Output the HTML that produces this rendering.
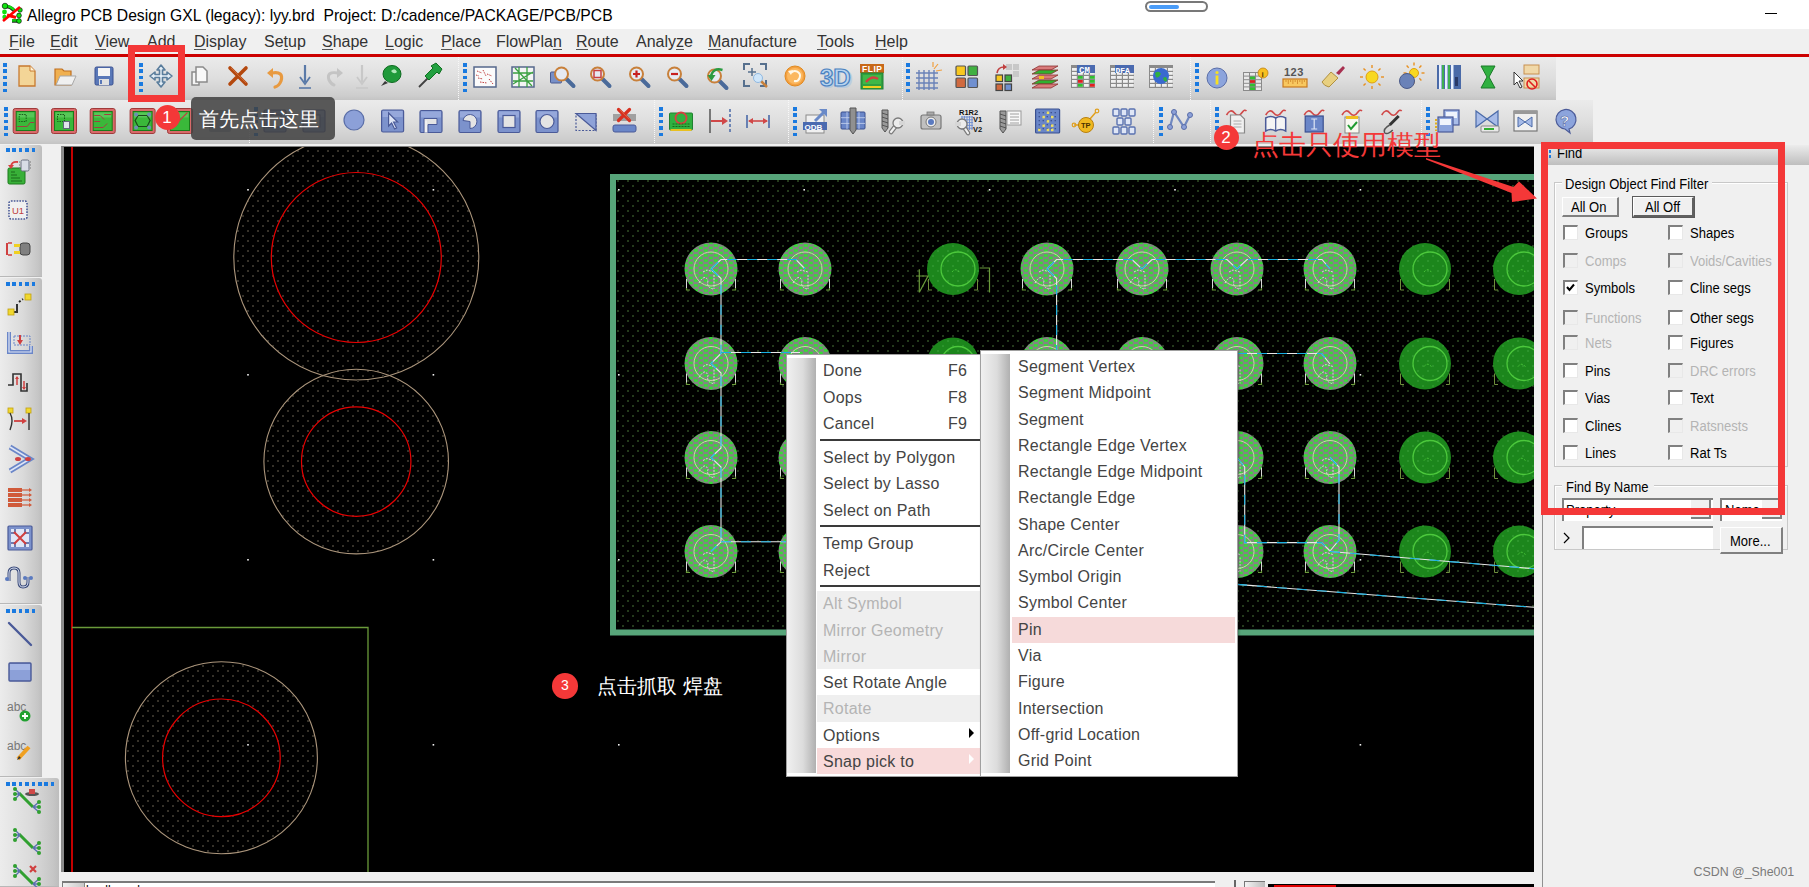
<!DOCTYPE html><html><head><meta charset="utf-8"><style>
*{margin:0;padding:0;box-sizing:border-box}
html,body{width:1809px;height:887px;overflow:hidden;background:#f0f0f0;font-family:"Liberation Sans",sans-serif;color:#000}
.ab{position:absolute}
.t{position:absolute;white-space:nowrap;line-height:1}
.mi{position:absolute;white-space:nowrap;line-height:1;font-size:16px;color:#444;letter-spacing:.25px}
.fp{position:absolute;white-space:nowrap;line-height:1;font-size:14px;color:#000;transform:scaleX(.93);transform-origin:0 0}
.dis{color:#b4b4b4 !important}
.cb{position:absolute;width:15px;height:15px;background:#fff;border-top:2px solid #808080;border-left:2px solid #808080;border-bottom:1px solid #e8e8e8;border-right:1px solid #e8e8e8}
.cbd{background:#f0f0f0}
</style></head><body>

<div class="ab" style="left:0;top:0;width:1809px;height:29px;background:#fff"></div>
<div class="t" style="left:27px;top:7.5px;font-size:15.7px;color:#000">Allegro PCB Design GXL (legacy): lyy.brd&nbsp; Project: D:/cadence/PACKAGE/PCB/PCB</div>
<svg class="ab" style="left:0;top:0" width="26" height="28" viewBox="0 0 26 28">
<g stroke="#000" stroke-width="1" opacity=".9">
<path d="M5 6.5 Q10 6 14 10.5" stroke="#000" stroke-width="3.4" fill="none"/>
<path d="M12 21 H19" stroke="#000" stroke-width="3.4"/>
</g>
<path d="M5 6 Q10 5.5 14 10" stroke="#10e010" stroke-width="2.4" fill="none"/>
<path d="M12 20.5 H19" stroke="#10c010" stroke-width="2.6"/>
<circle cx="5" cy="6" r="2.8" fill="#10e010" stroke="#000" stroke-width=".6"/><circle cx="4.5" cy="12" r="2.4" fill="#10e010"/><circle cx="4.5" cy="17" r="2.2" fill="#10e010"/>
<circle cx="20" cy="10" r="2.3" fill="#10e010" stroke="#000" stroke-width=".6"/><circle cx="19" cy="15.5" r="2.4" fill="#10e010" stroke="#000" stroke-width=".6"/><circle cx="19" cy="21" r="2.4" fill="#10e010" stroke="#000" stroke-width=".6"/>
<path d="M3 21 L20 7" stroke="#ff0000" stroke-width="2.6"/>
<path d="M7 15 L16 17.5" stroke="#ff0000" stroke-width="3.2"/>
</svg>
<div class="ab" style="left:1145px;top:1px;width:63px;height:11px;border:2.5px solid #787878;border-radius:6px;background:#fff"></div>
<div class="ab" style="left:1149px;top:5px;width:30px;height:4px;background:#4a9cf8;border-radius:2px"></div>
<div class="ab" style="left:1765px;top:13px;width:12px;height:1.2px;background:#000"></div>
<div class="ab" style="left:0;top:29px;width:1809px;height:25px;background:#f0f0f0"></div>
<div class="t" style="left:9px;top:34px;font-size:16px;color:#333">File</div>
<div class="ab" style="left:9.0px;top:48.5px;width:9.8px;height:1px;background:#555"></div>
<div class="t" style="left:50px;top:34px;font-size:16px;color:#333">Edit</div>
<div class="ab" style="left:50.0px;top:48.5px;width:10.7px;height:1px;background:#555"></div>
<div class="t" style="left:95px;top:34px;font-size:16px;color:#333">View</div>
<div class="ab" style="left:95.0px;top:48.5px;width:10.7px;height:1px;background:#555"></div>
<div class="t" style="left:147px;top:34px;font-size:16px;color:#333">Add</div>
<div class="ab" style="left:147.0px;top:48.5px;width:10.7px;height:1px;background:#555"></div>
<div class="t" style="left:194px;top:34px;font-size:16px;color:#333">Display</div>
<div class="ab" style="left:194.0px;top:48.5px;width:11.6px;height:1px;background:#555"></div>
<div class="t" style="left:264px;top:34px;font-size:16px;color:#333">Setup</div>
<div class="ab" style="left:283.6px;top:48.5px;width:4.5px;height:1px;background:#555"></div>
<div class="t" style="left:322px;top:34px;font-size:16px;color:#333">Shape</div>
<div class="ab" style="left:322.0px;top:48.5px;width:10.7px;height:1px;background:#555"></div>
<div class="t" style="left:385px;top:34px;font-size:16px;color:#333">Logic</div>
<div class="ab" style="left:385.0px;top:48.5px;width:8.9px;height:1px;background:#555"></div>
<div class="t" style="left:441px;top:34px;font-size:16px;color:#333">Place</div>
<div class="ab" style="left:441.0px;top:48.5px;width:10.7px;height:1px;background:#555"></div>
<div class="t" style="left:496px;top:34px;font-size:16px;color:#333">FlowPlan</div>
<div class="ab" style="left:553.0px;top:48.5px;width:8.9px;height:1px;background:#555"></div>
<div class="t" style="left:576px;top:34px;font-size:16px;color:#333">Route</div>
<div class="ab" style="left:576.0px;top:48.5px;width:11.6px;height:1px;background:#555"></div>
<div class="t" style="left:636px;top:34px;font-size:16px;color:#333">Analyze</div>
<div class="ab" style="left:676.0px;top:48.5px;width:8.0px;height:1px;background:#555"></div>
<div class="t" style="left:708px;top:34px;font-size:16px;color:#333">Manufacture</div>
<div class="ab" style="left:708.0px;top:48.5px;width:13.3px;height:1px;background:#555"></div>
<div class="t" style="left:817px;top:34px;font-size:16px;color:#333">Tools</div>
<div class="ab" style="left:817.0px;top:48.5px;width:9.8px;height:1px;background:#555"></div>
<div class="t" style="left:875px;top:34px;font-size:16px;color:#333">Help</div>
<div class="ab" style="left:875.0px;top:48.5px;width:11.6px;height:1px;background:#555"></div>
<div class="ab" style="left:0;top:54px;width:1809px;height:3px;background:#cc0000"></div>
<div class="ab" style="left:0;top:57px;width:1809px;height:88px;background:#f0f0f0"></div>
<div class="ab" style="left:0px;top:57px;width:1556px;height:43px;background:linear-gradient(#ebebeb,#dedede 50%,#cdcdcd 90%,#c4c4c4)"></div>
<div class="ab" style="left:0px;top:100px;width:1593px;height:43.5px;background:linear-gradient(#ebebeb,#dedede 50%,#cdcdcd 90%,#c4c4c4)"></div>
<div class="ab" style="left:458px;top:57px;width:1px;height:43px;border-left:1px dotted #f8f8f8"></div>
<div class="ab" style="left:902px;top:57px;width:1px;height:43px;border-left:1px dotted #f8f8f8"></div>
<div class="ab" style="left:1190px;top:57px;width:1px;height:43px;border-left:1px dotted #f8f8f8"></div>
<div class="ab" style="left:249px;top:100px;width:1px;height:43px;border-left:1px dotted #f8f8f8"></div>
<div class="ab" style="left:654px;top:100px;width:1px;height:43px;border-left:1px dotted #f8f8f8"></div>
<div class="ab" style="left:788px;top:100px;width:1px;height:43px;border-left:1px dotted #f8f8f8"></div>
<div class="ab" style="left:1153px;top:100px;width:1px;height:43px;border-left:1px dotted #f8f8f8"></div>
<div class="ab" style="left:1210px;top:100px;width:1px;height:43px;border-left:1px dotted #f8f8f8"></div>
<div class="ab" style="left:1421px;top:100px;width:1px;height:43px;border-left:1px dotted #f8f8f8"></div>
<div class="ab" style="left:3px;top:63.0px;width:3.5px;height:3.5px;background:#1a7ae0"></div>
<div class="ab" style="left:3px;top:69.4px;width:3.5px;height:3.5px;background:#1a7ae0"></div>
<div class="ab" style="left:3px;top:75.8px;width:3.5px;height:3.5px;background:#1a7ae0"></div>
<div class="ab" style="left:3px;top:82.2px;width:3.5px;height:3.5px;background:#1a7ae0"></div>
<div class="ab" style="left:3px;top:88.6px;width:3.5px;height:3.5px;background:#1a7ae0"></div>
<div class="ab" style="left:139px;top:63.0px;width:3.5px;height:3.5px;background:#1a7ae0"></div>
<div class="ab" style="left:139px;top:69.4px;width:3.5px;height:3.5px;background:#1a7ae0"></div>
<div class="ab" style="left:139px;top:75.8px;width:3.5px;height:3.5px;background:#1a7ae0"></div>
<div class="ab" style="left:139px;top:82.2px;width:3.5px;height:3.5px;background:#1a7ae0"></div>
<div class="ab" style="left:139px;top:88.6px;width:3.5px;height:3.5px;background:#1a7ae0"></div>
<div class="ab" style="left:463px;top:63.0px;width:3.5px;height:3.5px;background:#1a7ae0"></div>
<div class="ab" style="left:463px;top:69.4px;width:3.5px;height:3.5px;background:#1a7ae0"></div>
<div class="ab" style="left:463px;top:75.8px;width:3.5px;height:3.5px;background:#1a7ae0"></div>
<div class="ab" style="left:463px;top:82.2px;width:3.5px;height:3.5px;background:#1a7ae0"></div>
<div class="ab" style="left:463px;top:88.6px;width:3.5px;height:3.5px;background:#1a7ae0"></div>
<div class="ab" style="left:906px;top:63.0px;width:3.5px;height:3.5px;background:#1a7ae0"></div>
<div class="ab" style="left:906px;top:69.4px;width:3.5px;height:3.5px;background:#1a7ae0"></div>
<div class="ab" style="left:906px;top:75.8px;width:3.5px;height:3.5px;background:#1a7ae0"></div>
<div class="ab" style="left:906px;top:82.2px;width:3.5px;height:3.5px;background:#1a7ae0"></div>
<div class="ab" style="left:906px;top:88.6px;width:3.5px;height:3.5px;background:#1a7ae0"></div>
<div class="ab" style="left:1195px;top:63.0px;width:3.5px;height:3.5px;background:#1a7ae0"></div>
<div class="ab" style="left:1195px;top:69.4px;width:3.5px;height:3.5px;background:#1a7ae0"></div>
<div class="ab" style="left:1195px;top:75.8px;width:3.5px;height:3.5px;background:#1a7ae0"></div>
<div class="ab" style="left:1195px;top:82.2px;width:3.5px;height:3.5px;background:#1a7ae0"></div>
<div class="ab" style="left:1195px;top:88.6px;width:3.5px;height:3.5px;background:#1a7ae0"></div>
<div class="ab" style="left:4px;top:107.0px;width:3.5px;height:3.5px;background:#1a7ae0"></div>
<div class="ab" style="left:4px;top:113.4px;width:3.5px;height:3.5px;background:#1a7ae0"></div>
<div class="ab" style="left:4px;top:119.8px;width:3.5px;height:3.5px;background:#1a7ae0"></div>
<div class="ab" style="left:4px;top:126.2px;width:3.5px;height:3.5px;background:#1a7ae0"></div>
<div class="ab" style="left:4px;top:132.6px;width:3.5px;height:3.5px;background:#1a7ae0"></div>
<div class="ab" style="left:254px;top:107.0px;width:3.5px;height:3.5px;background:#1a7ae0"></div>
<div class="ab" style="left:254px;top:113.4px;width:3.5px;height:3.5px;background:#1a7ae0"></div>
<div class="ab" style="left:254px;top:119.8px;width:3.5px;height:3.5px;background:#1a7ae0"></div>
<div class="ab" style="left:254px;top:126.2px;width:3.5px;height:3.5px;background:#1a7ae0"></div>
<div class="ab" style="left:254px;top:132.6px;width:3.5px;height:3.5px;background:#1a7ae0"></div>
<div class="ab" style="left:659px;top:107.0px;width:3.5px;height:3.5px;background:#1a7ae0"></div>
<div class="ab" style="left:659px;top:113.4px;width:3.5px;height:3.5px;background:#1a7ae0"></div>
<div class="ab" style="left:659px;top:119.8px;width:3.5px;height:3.5px;background:#1a7ae0"></div>
<div class="ab" style="left:659px;top:126.2px;width:3.5px;height:3.5px;background:#1a7ae0"></div>
<div class="ab" style="left:659px;top:132.6px;width:3.5px;height:3.5px;background:#1a7ae0"></div>
<div class="ab" style="left:793px;top:107.0px;width:3.5px;height:3.5px;background:#1a7ae0"></div>
<div class="ab" style="left:793px;top:113.4px;width:3.5px;height:3.5px;background:#1a7ae0"></div>
<div class="ab" style="left:793px;top:119.8px;width:3.5px;height:3.5px;background:#1a7ae0"></div>
<div class="ab" style="left:793px;top:126.2px;width:3.5px;height:3.5px;background:#1a7ae0"></div>
<div class="ab" style="left:793px;top:132.6px;width:3.5px;height:3.5px;background:#1a7ae0"></div>
<div class="ab" style="left:1159px;top:107.0px;width:3.5px;height:3.5px;background:#1a7ae0"></div>
<div class="ab" style="left:1159px;top:113.4px;width:3.5px;height:3.5px;background:#1a7ae0"></div>
<div class="ab" style="left:1159px;top:119.8px;width:3.5px;height:3.5px;background:#1a7ae0"></div>
<div class="ab" style="left:1159px;top:126.2px;width:3.5px;height:3.5px;background:#1a7ae0"></div>
<div class="ab" style="left:1159px;top:132.6px;width:3.5px;height:3.5px;background:#1a7ae0"></div>
<div class="ab" style="left:1215px;top:107.0px;width:3.5px;height:3.5px;background:#1a7ae0"></div>
<div class="ab" style="left:1215px;top:113.4px;width:3.5px;height:3.5px;background:#1a7ae0"></div>
<div class="ab" style="left:1215px;top:119.8px;width:3.5px;height:3.5px;background:#1a7ae0"></div>
<div class="ab" style="left:1215px;top:126.2px;width:3.5px;height:3.5px;background:#1a7ae0"></div>
<div class="ab" style="left:1215px;top:132.6px;width:3.5px;height:3.5px;background:#1a7ae0"></div>
<div class="ab" style="left:1426px;top:107.0px;width:3.5px;height:3.5px;background:#1a7ae0"></div>
<div class="ab" style="left:1426px;top:113.4px;width:3.5px;height:3.5px;background:#1a7ae0"></div>
<div class="ab" style="left:1426px;top:119.8px;width:3.5px;height:3.5px;background:#1a7ae0"></div>
<div class="ab" style="left:1426px;top:126.2px;width:3.5px;height:3.5px;background:#1a7ae0"></div>
<div class="ab" style="left:1426px;top:132.6px;width:3.5px;height:3.5px;background:#1a7ae0"></div>
<svg class="ab" style="left:0;top:57px" width="1809" height="88" viewBox="0 57 1809 88">
<path d="M19 66 H30 L35 71 V86 H19 Z" fill="#f3d597" stroke="#c87a30" stroke-width="1.3"/><path d="M30 66 V71 H35" fill="#fff4d8" stroke="#c87a30" stroke-width="1"/>
<path d="M55 69 H62 L64 71 H71 V85 H55 Z" fill="#f0b050" stroke="#c07020" stroke-width="1.2"/><path d="M56 85 L60 76 H76 L72 85 Z" fill="#f0f0f0" stroke="#a8a8a8" stroke-width="1"/>
<rect x="95" y="67" width="18" height="18" rx="1.5" fill="#5a78b8" stroke="#3a5090" stroke-width="1"/><rect x="98" y="68" width="12" height="8" fill="#f4f4f4"/><rect x="99" y="79" width="10" height="6" fill="#e0e0e0"/><rect x="100" y="80" width="2" height="4" fill="#5a78b8"/>
<path d="M161 65 L165 70 H162.5 V74.5 H167 V72 L172 76 L167 80 V77.5 H162.5 V82 H165 L161 87 L157 82 H159.5 V77.5 H155 V80 L150 76 L155 72 V74.5 H159.5 V70 H157 Z" fill="#e4eef6" stroke="#5a7d9c" stroke-width="1.6" stroke-linejoin="round"/>
<path d="M192 72 H199 V85 H192 Z" fill="#f4f4f4" stroke="#8a8a8a" stroke-width="1.5"/><path d="M196 67 H203 L207 71 V82 H196 Z" fill="#f8f8f8" stroke="#8a8a8a" stroke-width="1.5"/>
<path d="M230 68 L246 84 M246 68 L230 84" stroke="#b4480e" stroke-width="3.6" stroke-linecap="round"/><path d="M231 68 L246 83" stroke="#e08050" stroke-width="1" opacity=".6"/>
<path d="M272 73 Q284 71 281 81 Q279 86 275 87" stroke="#e89a40" stroke-width="3.2" fill="none" stroke-linecap="round"/><path d="M267 73 L273 68 L273 78 Z" fill="#e89a40"/>
<path d="M305 65 V82" stroke="#5a7aa8" stroke-width="2.2"/><path d="M300 77 L305 84 L310 77" stroke="#5a7aa8" stroke-width="1.8" fill="none"/><path d="M299 88 H311" stroke="#5a7aa8" stroke-width="1.6"/>
<path d="M338 73 Q326 71 329 80 Q331 84 334 85" stroke="#c4c4c4" stroke-width="3" fill="none" stroke-linecap="round"/><path d="M343 73 L337 68 L337 78 Z" fill="#c4c4c4"/>
<path d="M362 65 V82" stroke="#c8c8c8" stroke-width="2.2"/><path d="M357 77 L362 84 L367 77" stroke="#c8c8c8" stroke-width="1.8" fill="none"/><path d="M356 88 H368" stroke="#c8c8c8" stroke-width="1.6"/>
<path d="M385 81 L381 86 L388 83" fill="#3a3a3a"/><ellipse cx="392" cy="74" rx="9" ry="8.5" fill="#1f9a3a" stroke="#0e6a20" stroke-width="1"/><path d="M391 71 Q395 67 397 72 Q394 75 391 71" fill="#aee8b8"/>
<path d="M419 87 L428 78" stroke="#404040" stroke-width="1.8"/><path d="M425 76 L433 68 L431 66 L436 63 L442 69 L439 74 L437 72 L429 80 Z" fill="#22a040" stroke="#107020" stroke-width="1"/>
<rect x="474" y="67" width="22" height="20" fill="#fbfbfb" stroke="#56688c" stroke-width="1.5"/><path d="M477 71 L482 73" stroke="#c04040" stroke-width="1" stroke-dasharray="1.5 1"/><path d="M483 70 L486 76" stroke="#c04040" stroke-width="1" stroke-dasharray="1.5 1"/><path d="M478 78 L483 79" stroke="#c04040" stroke-width="1" stroke-dasharray="1.5 1"/><path d="M487 74 L492 76" stroke="#c04040" stroke-width="1" stroke-dasharray="1.5 1"/><path d="M480 82 L487 83" stroke="#c04040" stroke-width="1" stroke-dasharray="1.5 1"/><path d="M489 79 L493 84" stroke="#c04040" stroke-width="1" stroke-dasharray="1.5 1"/><path d="M476 75 L479 76" stroke="#c04040" stroke-width="1" stroke-dasharray="1.5 1"/>
<rect x="512" y="67" width="22" height="20" fill="#f4f4f4" stroke="#56688c" stroke-width="1.5"/><path d="M513 73 H533 M513 81 H533 M519 67 V87 M527 67 V87 M515 68 L532 86 M513 84 L533 72" stroke="#3aa040" stroke-width="1.3"/>
<rect x="550.5" y="72" width="11" height="11" rx="1" fill="#7890c8" stroke="#4a5a90" stroke-width="1"/><path d="M566.5 79 L573.5 86" stroke="#4a6a9a" stroke-width="4" stroke-linecap="round"/><circle cx="561.5" cy="74" r="6.5" fill="#e6eaf2" stroke="#c8803a" stroke-width="2"/>
<path d="M602.5 79 L609.5 86" stroke="#4a6a9a" stroke-width="4" stroke-linecap="round"/><circle cx="597.5" cy="74" r="6.5" fill="#e6eaf2" stroke="#c8803a" stroke-width="2"/><rect x="594.0" y="70.5" width="7" height="7" fill="none" stroke="#c84040" stroke-width="1.5"/>
<path d="M641.5 79 L648.5 86" stroke="#4a6a9a" stroke-width="4" stroke-linecap="round"/><circle cx="636.5" cy="74" r="6.5" fill="#e6eaf2" stroke="#c8803a" stroke-width="2"/><path d="M633.0 74 H640.0 M636.5 70.5 V77.5" stroke="#c82020" stroke-width="2.2"/>
<path d="M679.5 79 L686.5 86" stroke="#4a6a9a" stroke-width="4" stroke-linecap="round"/><circle cx="674.5" cy="74" r="6.5" fill="#e6eaf2" stroke="#c8803a" stroke-width="2"/><path d="M671.0 74 H678.0" stroke="#c82020" stroke-width="2.2"/>
<path d="M719.5 81 L726.5 88" stroke="#4a6a9a" stroke-width="4" stroke-linecap="round"/><circle cx="714.5" cy="76" r="6.5" fill="#e6eaf2" stroke="#c8803a" stroke-width="2"/><path d="M710.5 78 Q712.5 67 722.5 70" stroke="#2a9a40" stroke-width="2.5" fill="none"/><path d="M707.5 75 L711.5 81 L715.5 75 Z" fill="#2a9a40"/>
<path d="M744 70 V64 H750 M760 64 H766 V70 M766 80 V86 H760 M750 86 H744 V80" stroke="#56708e" stroke-width="2" fill="none"/><path d="M752 68 V76 M748 72 H756" stroke="#56708e" stroke-width="1.5"/><path d="M761 81 L767 87" stroke="#c8803a" stroke-width="2.5"/><circle cx="758" cy="78" r="4.5" fill="#cfe6fa" stroke="#90b8e0" stroke-width="1"/>
<circle cx="795" cy="76" r="10" fill="#f4a040" stroke="#e08a20" stroke-width="1"/><circle cx="795" cy="76" r="8" fill="#fbb860"/><path d="M791 73 A5 5 0 1 1 794 81" stroke="#fff8e8" stroke-width="2" fill="none"/><path d="M788 71 L793 70 L791 75 Z" fill="#fff8e8"/>
<text x="821" y="88" font-family="Liberation Sans" font-weight="bold" font-size="25" fill="#a8c4e4" opacity=".6">3D</text><text x="820" y="86" font-family="Liberation Sans" font-weight="bold" font-size="24" fill="#b8d4f0" stroke="#4a82c0" stroke-width="1.2">3D</text>
<rect x="860" y="64" width="24" height="9" fill="#c86818"/><text x="862" y="72" font-family="Liberation Sans" font-weight="bold" font-size="8.5" fill="#fff" letter-spacing=".5">FLIP</text><rect x="861" y="73" width="22" height="16" fill="#30a040" stroke="#208030" stroke-width="1"/><rect x="863" y="75" width="18" height="9" fill="#40b848"/><path d="M866 82 Q872 75 878 79" stroke="#d04040" stroke-width="2.5" fill="none"/><rect x="863" y="86" width="18" height="2" fill="#f0d020"/>
<path d="M919 70 V90 M916 73 H938" stroke="#6a82b8" stroke-width="1.4"/><path d="M924 70 V90 M916 78 H938" stroke="#6a82b8" stroke-width="1.4"/><path d="M929 70 V90 M916 83 H938" stroke="#6a82b8" stroke-width="1.4"/><path d="M934 70 V90 M916 88 H938" stroke="#6a82b8" stroke-width="1.4"/><path d="M934 69 L938 64 M936 71 L942 70 M933 67 L933 62" stroke="#f0a040" stroke-width="1.2"/>
<rect x="956" y="66" width="9.5" height="9.5" rx="1" fill="#f8c820" stroke="#555" stroke-width="1.2"/><rect x="968" y="66" width="9.5" height="9.5" rx="1" fill="#40b040" stroke="#555" stroke-width="1.2"/><rect x="956" y="78" width="9.5" height="9.5" rx="1" fill="#d06a40" stroke="#555" stroke-width="1.2"/><rect x="968" y="78" width="9.5" height="9.5" rx="1" fill="#7090d0" stroke="#555" stroke-width="1.2"/>
<rect x="1006" y="64" width="6" height="6" fill="#c8c8c8"/><rect x="1013" y="64" width="6" height="6" fill="#c8c8c8"/><rect x="1013" y="71" width="6" height="6" fill="#c8c8c8"/><rect x="996" y="75" width="6.5" height="6.5" fill="#f8c820" stroke="#444" stroke-width="1.2"/><rect x="1005" y="75" width="6.5" height="6.5" fill="#40b040" stroke="#444" stroke-width="1.2"/><rect x="996" y="84" width="6.5" height="6.5" fill="#d06a40" stroke="#444" stroke-width="1.2"/><rect x="1005" y="84" width="6.5" height="6.5" fill="#7090d0" stroke="#444" stroke-width="1.2"/><path d="M997 73 Q998 67 1004 67" stroke="#c04040" stroke-width="1.6" fill="none"/><path d="M1003 64 L1007 67 L1003 70 Z" fill="#c04040"/>
<path d="M1032 70 L1039 66 H1058 L1051 70 Z" fill="#d87a7a" stroke="#8a3030" stroke-width=".8"/><path d="M1032 74 L1039 70 H1058 L1051 74 Z" fill="#30b030" stroke="#8a3030" stroke-width=".8"/><path d="M1032 79 L1039 75 H1058 L1051 79 Z" fill="#d87a7a" stroke="#8a3030" stroke-width=".8"/><path d="M1032 84 L1039 80 H1058 L1051 84 Z" fill="#30b030" stroke="#8a3030" stroke-width=".8"/><path d="M1032 88 L1039 84 H1058 L1051 88 Z" fill="#d87a7a" stroke="#8a3030" stroke-width=".8"/><rect x="1039" y="76" width="5" height="3" fill="#f0c020"/>
<rect x="1071" y="65" width="24" height="23" fill="#8a8a8a"/><rect x="1072" y="68" width="4.8" height="2.8" fill="#f0f0f0"/><rect x="1078" y="68" width="4.8" height="2.8" fill="#f0f0f0"/><rect x="1084" y="68" width="4.8" height="2.8" fill="#f0f0f0"/><rect x="1090" y="68" width="4.8" height="2.8" fill="#f0f0f0"/><rect x="1072" y="72" width="4.8" height="2.8" fill="#f0f0f0"/><rect x="1078" y="72" width="4.8" height="2.8" fill="#f0f0f0"/><rect x="1084" y="72" width="4.8" height="2.8" fill="#f0f0f0"/><rect x="1090" y="72" width="4.8" height="2.8" fill="#f0f0f0"/><rect x="1072" y="76" width="4.8" height="2.8" fill="#f0f0f0"/><rect x="1078" y="76" width="4.8" height="2.8" fill="#f0f0f0"/><rect x="1084" y="76" width="4.8" height="2.8" fill="#f0f0f0"/><rect x="1090" y="76" width="4.8" height="2.8" fill="#f0f0f0"/><rect x="1072" y="80" width="4.8" height="2.8" fill="#f0f0f0"/><rect x="1078" y="80" width="4.8" height="2.8" fill="#f0f0f0"/><rect x="1084" y="80" width="4.8" height="2.8" fill="#f0f0f0"/><rect x="1090" y="80" width="4.8" height="2.8" fill="#f0f0f0"/><rect x="1072" y="84" width="4.8" height="2.8" fill="#f0f0f0"/><rect x="1078" y="84" width="4.8" height="2.8" fill="#f0f0f0"/><rect x="1084" y="84" width="4.8" height="2.8" fill="#f0f0f0"/><rect x="1090" y="84" width="4.8" height="2.8" fill="#f0f0f0"/><rect x="1077" y="65" width="18" height="8" fill="#4a6ab0"/><text x="1079" y="72.5" font-family="Liberation Mono" font-weight="bold" font-size="9" fill="#fff">CM</text><rect x="1078" y="76" width="4.8" height="2.8" fill="#30c030"/><rect x="1090" y="76" width="4.8" height="2.8" fill="#30c030"/><rect x="1078" y="80" width="4.8" height="2.8" fill="#e02020"/><rect x="1090" y="80" width="4.8" height="2.8" fill="#30c030"/><rect x="1078" y="84" width="4.8" height="2.8" fill="#30c030"/><rect x="1090" y="84" width="4.8" height="2.8" fill="#e02020"/>
<rect x="1110" y="65" width="24" height="23" fill="#8a8a8a"/><rect x="1111" y="68" width="4.8" height="2.8" fill="#f0f0f0"/><rect x="1117" y="68" width="4.8" height="2.8" fill="#f0f0f0"/><rect x="1123" y="68" width="4.8" height="2.8" fill="#f0f0f0"/><rect x="1129" y="68" width="4.8" height="2.8" fill="#f0f0f0"/><rect x="1111" y="72" width="4.8" height="2.8" fill="#f0f0f0"/><rect x="1117" y="72" width="4.8" height="2.8" fill="#f0f0f0"/><rect x="1123" y="72" width="4.8" height="2.8" fill="#f0f0f0"/><rect x="1129" y="72" width="4.8" height="2.8" fill="#f0f0f0"/><rect x="1111" y="76" width="4.8" height="2.8" fill="#f0f0f0"/><rect x="1117" y="76" width="4.8" height="2.8" fill="#f0f0f0"/><rect x="1123" y="76" width="4.8" height="2.8" fill="#f0f0f0"/><rect x="1129" y="76" width="4.8" height="2.8" fill="#f0f0f0"/><rect x="1111" y="80" width="4.8" height="2.8" fill="#f0f0f0"/><rect x="1117" y="80" width="4.8" height="2.8" fill="#f0f0f0"/><rect x="1123" y="80" width="4.8" height="2.8" fill="#f0f0f0"/><rect x="1129" y="80" width="4.8" height="2.8" fill="#f0f0f0"/><rect x="1111" y="84" width="4.8" height="2.8" fill="#f0f0f0"/><rect x="1117" y="84" width="4.8" height="2.8" fill="#f0f0f0"/><rect x="1123" y="84" width="4.8" height="2.8" fill="#f0f0f0"/><rect x="1129" y="84" width="4.8" height="2.8" fill="#f0f0f0"/><rect x="1115" y="65" width="19" height="8" fill="#4a6ab0"/><text x="1115.5" y="72.5" font-family="Liberation Mono" font-weight="bold" font-size="8" fill="#fff">DFA</text>
<rect x="1149" y="65" width="24" height="23" fill="#8a8a8a"/><rect x="1150" y="68" width="4.8" height="2.8" fill="#f0f0f0"/><rect x="1156" y="68" width="4.8" height="2.8" fill="#f0f0f0"/><rect x="1162" y="68" width="4.8" height="2.8" fill="#f0f0f0"/><rect x="1168" y="68" width="4.8" height="2.8" fill="#f0f0f0"/><rect x="1150" y="72" width="4.8" height="2.8" fill="#f0f0f0"/><rect x="1156" y="72" width="4.8" height="2.8" fill="#f0f0f0"/><rect x="1162" y="72" width="4.8" height="2.8" fill="#f0f0f0"/><rect x="1168" y="72" width="4.8" height="2.8" fill="#f0f0f0"/><rect x="1150" y="76" width="4.8" height="2.8" fill="#f0f0f0"/><rect x="1156" y="76" width="4.8" height="2.8" fill="#f0f0f0"/><rect x="1162" y="76" width="4.8" height="2.8" fill="#f0f0f0"/><rect x="1168" y="76" width="4.8" height="2.8" fill="#f0f0f0"/><rect x="1150" y="80" width="4.8" height="2.8" fill="#f0f0f0"/><rect x="1156" y="80" width="4.8" height="2.8" fill="#f0f0f0"/><rect x="1162" y="80" width="4.8" height="2.8" fill="#f0f0f0"/><rect x="1168" y="80" width="4.8" height="2.8" fill="#f0f0f0"/><rect x="1150" y="84" width="4.8" height="2.8" fill="#f0f0f0"/><rect x="1156" y="84" width="4.8" height="2.8" fill="#f0f0f0"/><rect x="1162" y="84" width="4.8" height="2.8" fill="#f0f0f0"/><rect x="1168" y="84" width="4.8" height="2.8" fill="#f0f0f0"/><circle cx="1161" cy="76" r="8" fill="#3a6ad0"/><path d="M1155 73 Q1159 70 1161 74 Q1158 79 1156 77 Z M1163 78 Q1167 75 1167 81 Q1164 83 1163 78Z" fill="#30b040"/>
<circle cx="1217" cy="78" r="10" fill="#8ca4dc" stroke="#5a6ea8" stroke-width="1"/><circle cx="1217" cy="72.5" r="1.6" fill="#f8e020"/><rect x="1215.6" y="75.5" width="2.8" height="9" fill="#f8e020"/>
<rect x="1243" y="72" width="19" height="19" fill="#8a8a8a"/><rect x="1244" y="73.0" width="5" height="2.6" fill="#e8e8e8"/><rect x="1250" y="73.0" width="5" height="2.6" fill="#e8e8e8"/><rect x="1256" y="73.0" width="5" height="2.6" fill="#e8e8e8"/><rect x="1244" y="76.6" width="5" height="2.6" fill="#e8e8e8"/><rect x="1250" y="76.6" width="5" height="2.6" fill="#30c030"/><rect x="1256" y="76.6" width="5" height="2.6" fill="#e8e8e8"/><rect x="1244" y="80.2" width="5" height="2.6" fill="#e8e8e8"/><rect x="1250" y="80.2" width="5" height="2.6" fill="#e02020"/><rect x="1256" y="80.2" width="5" height="2.6" fill="#e8e8e8"/><rect x="1244" y="83.8" width="5" height="2.6" fill="#e8e8e8"/><rect x="1250" y="83.8" width="5" height="2.6" fill="#30c030"/><rect x="1256" y="83.8" width="5" height="2.6" fill="#e8e8e8"/><rect x="1244" y="87.4" width="5" height="2.6" fill="#e8e8e8"/><rect x="1250" y="87.4" width="5" height="2.6" fill="#30c030"/><rect x="1256" y="87.4" width="5" height="2.6" fill="#e8e8e8"/><circle cx="1263" cy="73" r="5" fill="#f8c020" stroke="#c08010" stroke-width=".8"/><text x="1261.6" y="76.5" font-family="Liberation Sans" font-weight="bold" font-size="8" fill="#604000">i</text>
<text x="1284" y="76" font-family="Liberation Sans" font-weight="bold" font-size="11" fill="#555" letter-spacing=".5">123</text><rect x="1283" y="79" width="24" height="8" fill="#f8c860" stroke="#c87a20" stroke-width="1.2"/><path d="M1286.0 80 V82" stroke="#c87a20" stroke-width=".7"/><path d="M1288.3 80 V84" stroke="#c87a20" stroke-width=".7"/><path d="M1290.6 80 V82" stroke="#c87a20" stroke-width=".7"/><path d="M1292.9 80 V84" stroke="#c87a20" stroke-width=".7"/><path d="M1295.2 80 V82" stroke="#c87a20" stroke-width=".7"/><path d="M1297.5 80 V84" stroke="#c87a20" stroke-width=".7"/><path d="M1299.8 80 V82" stroke="#c87a20" stroke-width=".7"/><path d="M1302.1 80 V84" stroke="#c87a20" stroke-width=".7"/><path d="M1304.4 80 V82" stroke="#c87a20" stroke-width=".7"/>
<path d="M1336 73 L1343 66 L1345 68 L1339 75 Z" fill="#a83050"/><path d="M1322 82 L1331 72 L1338 78 L1329 87 Q1324 86 1322 82Z" fill="#e8d080" stroke="#b09040" stroke-width="1"/>
<circle cx="1372" cy="77" r="6" fill="#f8d820" stroke="#e0a010" stroke-width="1"/><path d="M1381.0 77.0 L1384.0 77.0" stroke="#e89020" stroke-width="1.4"/><path d="M1378.4 83.4 L1380.5 85.5" stroke="#e89020" stroke-width="1.4"/><path d="M1372.0 86.0 L1372.0 89.0" stroke="#e89020" stroke-width="1.4"/><path d="M1365.6 83.4 L1363.5 85.5" stroke="#e89020" stroke-width="1.4"/><path d="M1363.0 77.0 L1360.0 77.0" stroke="#e89020" stroke-width="1.4"/><path d="M1365.6 70.6 L1363.5 68.5" stroke="#e89020" stroke-width="1.4"/><path d="M1372.0 68.0 L1372.0 65.0" stroke="#e89020" stroke-width="1.4"/><path d="M1378.4 70.6 L1380.5 68.5" stroke="#e89020" stroke-width="1.4"/>
<circle cx="1414" cy="73" r="4.5" fill="#f8d820" stroke="#e0a010" stroke-width="1"/><path d="M1421.5 73.0 L1424.5 73.0" stroke="#e89020" stroke-width="1.4"/><path d="M1419.3 78.3 L1421.4 80.4" stroke="#e89020" stroke-width="1.4"/><path d="M1414.0 80.5 L1414.0 83.5" stroke="#e89020" stroke-width="1.4"/><path d="M1408.7 78.3 L1406.6 80.4" stroke="#e89020" stroke-width="1.4"/><path d="M1406.5 73.0 L1403.5 73.0" stroke="#e89020" stroke-width="1.4"/><path d="M1408.7 67.7 L1406.6 65.6" stroke="#e89020" stroke-width="1.4"/><path d="M1414.0 65.5 L1414.0 62.5" stroke="#e89020" stroke-width="1.4"/><path d="M1419.3 67.7 L1421.4 65.6" stroke="#e89020" stroke-width="1.4"/><circle cx="1407" cy="81" r="7.5" fill="#6a82b8" stroke="#4a5a88" stroke-width="1"/>
<rect x="1437" y="65" width="24" height="24" fill="#4a6aa8"/><rect x="1439" y="65" width="2.5" height="24" fill="#e8f0ff"/><rect x="1442" y="65" width="2" height="24" fill="#40b050"/><rect x="1445" y="65" width="2.5" height="24" fill="#e8f0ff"/><rect x="1448" y="65" width="2" height="24" fill="#40b050"/><rect x="1451" y="65" width="2.5" height="24" fill="#e8f0ff"/><rect x="1455" y="77" width="3" height="9" fill="#2a3a68"/>
<path d="M1481 66 H1495 L1489 77 L1495 88 H1481 L1487 77 Z" fill="#30b040" stroke="#1a7a28" stroke-width="1"/>
<rect x="1524" y="65" width="15" height="9" fill="#f0d8a8" stroke="#c89050" stroke-width="1"/><rect x="1524" y="78" width="15" height="10" fill="#f0d8a8" stroke="#c89050" stroke-width="1"/><circle cx="1532" cy="84" r="5" fill="none" stroke="#e02020" stroke-width="1.6"/><path d="M1529 81 L1535 87" stroke="#e02020" stroke-width="1.6"/><path d="M1514 72 L1514 85 L1517 82 L1520 88 L1522 87 L1519 81 L1523 81 Z" fill="#fff" stroke="#333" stroke-width="1"/>
<rect x="13.2" y="108.5" width="25" height="25" rx="2" fill="#d86a6a" stroke="#a03a3a" stroke-width="1"/><rect x="16.2" y="111.5" width="19" height="19" fill="#3ab83a" stroke="#1a7a1a" stroke-width="1"/><rect x="17.2" y="112.5" width="17" height="5" fill="#6ad06a" opacity=".6"/><rect x="19.2" y="114.5" width="7" height="7" fill="none" stroke="#1a5a1a" stroke-width="1" stroke-dasharray="1.5 1"/><path d="M17.2 126.5 H27.2 L30.2 122.5 H34.2" stroke="#a04040" stroke-width="1" fill="none"/>
<rect x="51.5" y="108.5" width="25" height="25" rx="2" fill="#d86a6a" stroke="#a03a3a" stroke-width="1"/><rect x="54.5" y="111.5" width="19" height="19" fill="#3ab83a" stroke="#1a7a1a" stroke-width="1"/><rect x="55.5" y="112.5" width="17" height="5" fill="#6ad06a" opacity=".6"/><rect x="57.5" y="114.5" width="7" height="7" fill="none" stroke="#1a5a1a" stroke-width="1" stroke-dasharray="1.5 1"/><rect x="63.5" y="121.5" width="6" height="7" fill="#e0e4ec" stroke="#606878" stroke-width="1"/>
<rect x="90.2" y="108.5" width="25" height="25" rx="2" fill="#d86a6a" stroke="#a03a3a" stroke-width="1"/><rect x="93.2" y="111.5" width="19" height="19" fill="#3ab83a" stroke="#1a7a1a" stroke-width="1"/><rect x="94.2" y="112.5" width="17" height="5" fill="#6ad06a" opacity=".6"/><path d="M94.2 115.5 H100.2 L104.2 119.5 M94.2 127.5 H103.2 L107.2 123.5 M104.2 114.5 H111.2 M94.2 121.5 H100.2" stroke="#a04040" stroke-width="1" fill="none"/>
<rect x="130.1" y="108.5" width="25" height="25" rx="2" fill="#d86a6a" stroke="#a03a3a" stroke-width="1"/><rect x="133.1" y="111.5" width="19" height="19" fill="#3ab83a" stroke="#1a7a1a" stroke-width="1"/><rect x="134.1" y="112.5" width="17" height="5" fill="#6ad06a" opacity=".6"/><path d="M138.1 115.5 H147.1 L150.1 120.5 L147.1 126.5 H138.1 L135.1 120.5 Z" fill="none" stroke="#1a4a1a" stroke-width="1.2"/><circle cx="136.1" cy="114.5" r="2" fill="#6a90b0"/><circle cx="149.1" cy="114.5" r="2" fill="#6a90b0"/><circle cx="136.1" cy="127.5" r="2" fill="#6a90b0"/><circle cx="149.1" cy="127.5" r="2" fill="#6a90b0"/>
<rect x="167.5" y="108.5" width="25" height="25" rx="2" fill="#d86a6a" stroke="#a03a3a" stroke-width="1"/><rect x="170.5" y="111.5" width="19" height="19" fill="#3ab83a" stroke="#1a7a1a" stroke-width="1"/><rect x="171.5" y="112.5" width="17" height="5" fill="#6ad06a" opacity=".6"/><path d="M171.5 116.5 L177.5 122.5 L187.5 112.5" stroke="#c04040" stroke-width="1.2" fill="none"/>
<rect x="209" y="110" width="22" height="22" rx="2" fill="#9aa0b0"/>
<rect x="264" y="110" width="22" height="22" rx="1.5" fill="#7c92cc" stroke="#4a5a98" stroke-width="1.2"/><rect x="265" y="111" width="20" height="6" fill="#a8b8e4" opacity=".6"/><rect x="269" y="115" width="12" height="12" fill="#e4e4e4" stroke="#4a5a98" stroke-width="1.2"/>
<rect x="303" y="110" width="22" height="22" rx="1.5" fill="#7c92cc" stroke="#4a5a98" stroke-width="1.2"/><rect x="304" y="111" width="20" height="6" fill="#a8b8e4" opacity=".6"/><rect x="308" y="115" width="12" height="12" fill="#e4e4e4" stroke="#4a5a98" stroke-width="1.2"/>
<circle cx="354" cy="120" r="10" fill="#8ca0d8" stroke="#5a6ea8" stroke-width="1.2"/>
<rect x="381.6" y="110" width="22" height="22" rx="1.5" fill="#7c92cc" stroke="#4a5a98" stroke-width="1.2"/><rect x="382.6" y="111" width="20" height="6" fill="#a8b8e4" opacity=".6"/><path d="M388.6 113 L388.6 126 L391.6 123 L394.6 129 L396.6 128 L393.6 122 L397.6 122 Z" fill="#dfe6f6" stroke="#4a5a98" stroke-width="1.2"/>
<rect x="420" y="110.5" width="22" height="22" rx="1.5" fill="#7c92cc" stroke="#4a5a98" stroke-width="1.2"/><rect x="421" y="111.5" width="20" height="6" fill="#a8b8e4" opacity=".6"/><path d="M424 132.5 V118.5 H437 V124.5 H428 V132.5" fill="#e4e4e4" stroke="#4a5a98" stroke-width="1"/><path d="M426 132.5 V120.5" stroke="#fff" stroke-width="1"/>
<rect x="459" y="110.5" width="22" height="22" rx="1.5" fill="#7c92cc" stroke="#4a5a98" stroke-width="1.2"/><rect x="460" y="111.5" width="20" height="6" fill="#a8b8e4" opacity=".6"/><path d="M463 120.5 A7 7 0 1 1 470 128.5 V121.5 Z" fill="#e4e4e4" stroke="#4a5a98" stroke-width="1"/>
<rect x="498" y="110.5" width="22" height="22" rx="1.5" fill="#7c92cc" stroke="#4a5a98" stroke-width="1.2"/><rect x="499" y="111.5" width="20" height="6" fill="#a8b8e4" opacity=".6"/><rect x="503" y="115.5" width="12" height="12" fill="#e4e4e4" stroke="#4a5a98" stroke-width="1.2"/>
<rect x="536" y="110.5" width="22" height="22" rx="1.5" fill="#7c92cc" stroke="#4a5a98" stroke-width="1.2"/><rect x="537" y="111.5" width="20" height="6" fill="#a8b8e4" opacity=".6"/><circle cx="547" cy="121.5" r="7" fill="#e4e4e4" stroke="#4a5a98" stroke-width="1.2"/>
<path d="M576 113.5 H596 V130.5 H576 Z" fill="none" stroke="#4a5a98" stroke-width="1.2" stroke-dasharray="2 1.5"/><path d="M576 113.5 H596 V130.5 Z" fill="#8ea2d8" stroke="#4a5a98" stroke-width="1.2"/>
<rect x="613" y="114" width="23" height="7" fill="#a0a0a0"/><path d="M618.5 109.5 L629.5 120.5 M629.5 109.5 L618.5 120.5" stroke="#d83020" stroke-width="3.2" stroke-linecap="round"/><path d="M619.5 109.5 L629.5 119.5" stroke="#e08050" stroke-width="1" opacity=".6"/><rect x="613" y="125" width="23" height="7" rx="2" fill="#6a86c8" stroke="#4a5a98" stroke-width="1"/>
<rect x="669.5" y="113" width="23" height="17" rx="1" fill="#30b040" stroke="#208030" stroke-width="1"/><rect x="670.5" y="129" width="21" height="2" fill="#e8c020"/><circle cx="681" cy="118" r="5.5" fill="none" stroke="#d84040" stroke-width="1.8"/><path d="M672.5 124 H689.5 M672.5 126.5 H689.5" stroke="#1a6a1a" stroke-width="1" stroke-dasharray="2 1"/>
<path d="M710 109 V133" stroke="#555" stroke-width="1.5"/><path d="M730 109 V133" stroke="#4a6aa8" stroke-width="1.5" stroke-dasharray="3 2"/><path d="M711 121 H723" stroke="#d04848" stroke-width="2"/><path d="M722 117 L728 121 L722 125 Z" fill="#d04848"/>
<path d="M747 115 V128 M769 115 V128" stroke="#4a6aa8" stroke-width="1.6"/><path d="M749 121 H767" stroke="#d04848" stroke-width="1.6"/><path d="M748 121 L753 118 V124 Z M768 121 L763 118 V124 Z" fill="#d04848"/>
<rect x="806" y="115" width="18" height="18" fill="#f0f0f0" stroke="#8a8a8a" stroke-width="1"/><path d="M815 121 L824 112" stroke="#6a8ac8" stroke-width="3"/><path d="M819 109 H827 V117 Z" fill="#6a8ac8"/><rect x="803" y="122" width="24" height="8" fill="#4a6ab0"/><text x="804.5" y="129.5" font-family="Liberation Sans" font-weight="bold" font-size="8" fill="#fff">ODB</text>
<rect x="841" y="112" width="24" height="17" rx="1" fill="#6a86c8" stroke="#3a5090" stroke-width="1"/><path d="M847 112 V129" stroke="#c8d4f0" stroke-width=".8"/><path d="M853 112 V129" stroke="#c8d4f0" stroke-width=".8"/><path d="M859 112 V129" stroke="#c8d4f0" stroke-width=".8"/><path d="M841 117.7 H865" stroke="#c8d4f0" stroke-width=".8"/><path d="M841 123.4 H865" stroke="#c8d4f0" stroke-width=".8"/><path d="M850 108 H856 V130 L853 134 L850 130 Z" fill="#909090" stroke="#555" stroke-width="1"/>
<path d="M882 110.0 H888 V128.0 L885 132.0 L882 128.0 Z" fill="#9a9a9a" stroke="#555" stroke-width="1"/><path d="M882 113.0 L888 115.0" stroke="#444" stroke-width=".8"/><path d="M882 117.0 L888 119.0" stroke="#444" stroke-width=".8"/><path d="M882 121.0 L888 123.0" stroke="#444" stroke-width=".8"/><path d="M882 125.0 L888 127.0" stroke="#444" stroke-width=".8"/><path d="M898 123 L891 132" stroke="#7a7a7a" stroke-width="4.6" stroke-linecap="round"/><path d="M898 123 L891 132" stroke="#f0f0f0" stroke-width="2.2" stroke-linecap="round"/><circle cx="898" cy="123" r="5" fill="#ececec" stroke="#7a7a7a" stroke-width="1.3"/><rect x="899" y="121" width="6" height="4" fill="#d6d6d6"/>
<rect x="921" y="115" width="20" height="14" rx="2" fill="#c0c0c0" stroke="#777" stroke-width="1.2"/><rect x="927" y="112" width="7" height="3" fill="#aaa" stroke="#777" stroke-width=".8"/><circle cx="931" cy="122" r="5" fill="#eee" stroke="#777" stroke-width="1"/><circle cx="931" cy="122" r="3" fill="#5a7ac0"/>
<text x="959" y="115" font-family="Liberation Sans" font-weight="bold" font-size="7.5" fill="#111" transform="scale(1,1)">R1R2</text><path d="M962.0 116 V130 M961 117.0 H973" stroke="#6a8ad0" stroke-width=".9"/><path d="M964.5 116 V130 M961 119.8 H973" stroke="#6a8ad0" stroke-width=".9"/><path d="M967.0 116 V130 M961 122.6 H973" stroke="#6a8ad0" stroke-width=".9"/><path d="M969.5 116 V130 M961 125.4 H973" stroke="#6a8ad0" stroke-width=".9"/><path d="M972.0 116 V130 M961 128.2 H973" stroke="#6a8ad0" stroke-width=".9"/><text x="973" y="122" font-family="Liberation Sans" font-weight="bold" font-size="7.5" fill="#111">V1</text><text x="973" y="132" font-family="Liberation Sans" font-weight="bold" font-size="7.5" fill="#111">V2</text><path d="M962 124 L968 133" stroke="#7a7a7a" stroke-width="4.6" stroke-linecap="round"/><path d="M962 124 L968 133" stroke="#f0f0f0" stroke-width="2.2" stroke-linecap="round"/><circle cx="962" cy="124" r="5" fill="#ececec" stroke="#7a7a7a" stroke-width="1.3"/><rect x="955" y="122" width="6" height="4" fill="#d6d6d6"/>
<path d="M1000 111.0 H1006 V129.0 L1003 133.0 L1000 129.0 Z" fill="#9a9a9a" stroke="#555" stroke-width="1"/><path d="M1000 114.0 L1006 116.0" stroke="#444" stroke-width=".8"/><path d="M1000 118.0 L1006 120.0" stroke="#444" stroke-width=".8"/><path d="M1000 122.0 L1006 124.0" stroke="#444" stroke-width=".8"/><path d="M1000 126.0 L1006 128.0" stroke="#444" stroke-width=".8"/><rect x="1007" y="111" width="14" height="14" fill="#f8f8f8" stroke="#999" stroke-width="1"/><path d="M1010 114 H1019 M1010 117 H1019 M1010 120 H1019 M1010 123 H1019" stroke="#888" stroke-width=".8"/>
<rect x="1035.6" y="109" width="24" height="24" rx="1" fill="#6a86c8" stroke="#3a5090" stroke-width="1.2"/><rect x="1038.6" y="112" width="1.3" height="1.3" fill="#3a5090"/><rect x="1038.6" y="116" width="1.3" height="1.3" fill="#3a5090"/><rect x="1038.6" y="120" width="1.3" height="1.3" fill="#3a5090"/><rect x="1038.6" y="124" width="1.3" height="1.3" fill="#3a5090"/><rect x="1038.6" y="128" width="1.3" height="1.3" fill="#3a5090"/><rect x="1042.6" y="112" width="1.3" height="1.3" fill="#3a5090"/><rect x="1042.6" y="116" width="1.3" height="1.3" fill="#3a5090"/><rect x="1042.6" y="120" width="1.3" height="1.3" fill="#3a5090"/><rect x="1042.6" y="124" width="1.3" height="1.3" fill="#3a5090"/><rect x="1042.6" y="128" width="1.3" height="1.3" fill="#3a5090"/><rect x="1046.6" y="112" width="1.3" height="1.3" fill="#3a5090"/><rect x="1046.6" y="116" width="1.3" height="1.3" fill="#3a5090"/><rect x="1046.6" y="120" width="1.3" height="1.3" fill="#3a5090"/><rect x="1046.6" y="124" width="1.3" height="1.3" fill="#3a5090"/><rect x="1046.6" y="128" width="1.3" height="1.3" fill="#3a5090"/><rect x="1050.6" y="112" width="1.3" height="1.3" fill="#3a5090"/><rect x="1050.6" y="116" width="1.3" height="1.3" fill="#3a5090"/><rect x="1050.6" y="120" width="1.3" height="1.3" fill="#3a5090"/><rect x="1050.6" y="124" width="1.3" height="1.3" fill="#3a5090"/><rect x="1050.6" y="128" width="1.3" height="1.3" fill="#3a5090"/><rect x="1054.6" y="112" width="1.3" height="1.3" fill="#3a5090"/><rect x="1054.6" y="116" width="1.3" height="1.3" fill="#3a5090"/><rect x="1054.6" y="120" width="1.3" height="1.3" fill="#3a5090"/><rect x="1054.6" y="124" width="1.3" height="1.3" fill="#3a5090"/><rect x="1054.6" y="128" width="1.3" height="1.3" fill="#3a5090"/><rect x="1046.6999999999998" y="111.5" width="2.5" height="2.5" fill="#f0e060"/><rect x="1042.3999999999999" y="115.8" width="2.5" height="2.5" fill="#f0e060"/><rect x="1051.0" y="115.8" width="2.5" height="2.5" fill="#f0e060"/><rect x="1046.6999999999998" y="120.1" width="2.5" height="2.5" fill="#f0e060"/><rect x="1042.3999999999999" y="124.4" width="2.5" height="2.5" fill="#f0e060"/><rect x="1051.0" y="124.4" width="2.5" height="2.5" fill="#f0e060"/><rect x="1038.1" y="128.7" width="2.5" height="2.5" fill="#f0e060"/><rect x="1046.6999999999998" y="128.7" width="2.5" height="2.5" fill="#f0e060"/><rect x="1051.0" y="128.7" width="2.5" height="2.5" fill="#f0e060"/>
<path d="M1074 125 L1081 125 M1090 119 L1096 112" stroke="#e0a020" stroke-width="1.5"/><circle cx="1074" cy="125" r="1.8" fill="none" stroke="#e0a020" stroke-width="1.2"/><circle cx="1097" cy="111" r="1.8" fill="none" stroke="#e0a020" stroke-width="1.2"/><circle cx="1086" cy="125" r="7.5" fill="#f0b820" stroke="#b88010" stroke-width="1"/><text x="1081" y="128" font-family="Liberation Sans" font-weight="bold" font-size="7.5" fill="#4a3000">TP</text>
<rect x="1113" y="109" width="6" height="7" rx="1" fill="#dfe6f6" stroke="#5a72b0" stroke-width="1.4"/><rect x="1121" y="109" width="6" height="7" rx="1" fill="#dfe6f6" stroke="#5a72b0" stroke-width="1.4"/><rect x="1129" y="109" width="6" height="7" rx="1" fill="#dfe6f6" stroke="#5a72b0" stroke-width="1.4"/><rect x="1117.0" y="118" width="6" height="7" rx="1" fill="#dfe6f6" stroke="#5a72b0" stroke-width="1.4"/><rect x="1125.0" y="118" width="6" height="7" rx="1" fill="#dfe6f6" stroke="#5a72b0" stroke-width="1.4"/><rect x="1113" y="127" width="6" height="7" rx="1" fill="#dfe6f6" stroke="#5a72b0" stroke-width="1.4"/><rect x="1121" y="127" width="6" height="7" rx="1" fill="#dfe6f6" stroke="#5a72b0" stroke-width="1.4"/><rect x="1129" y="127" width="6" height="7" rx="1" fill="#dfe6f6" stroke="#5a72b0" stroke-width="1.4"/>
<path d="M1170 127 L1174 112 L1184 127 L1190 115" stroke="#7088c0" stroke-width="2.2" fill="none"/><circle cx="1170" cy="127" r="2.5" fill="#8ca0d8" stroke="#5a6ea8" stroke-width="1"/><circle cx="1174" cy="112" r="2.5" fill="#8ca0d8" stroke="#5a6ea8" stroke-width="1"/><circle cx="1184" cy="127" r="2.5" fill="#8ca0d8" stroke="#5a6ea8" stroke-width="1"/><circle cx="1190" cy="115" r="2.5" fill="#8ca0d8" stroke="#5a6ea8" stroke-width="1"/>
<path d="M1226.5 115 Q1230.5 108 1234.5 113 Q1238.5 118 1242.5 112 Q1244.5 109 1246.5 111" stroke="#d04848" stroke-width="1.6" fill="none"/><path d="M1230.5 115 H1240.5 L1244.5 119 V133 H1230.5 Z" fill="#f0f0f0" stroke="#888" stroke-width="1.2"/><path d="M1233.5 121 H1241.5 M1233.5 124 H1241.5 M1233.5 127 H1241.5" stroke="#999" stroke-width=".8"/>
<path d="M1265.7 115 Q1269.7 108 1273.7 113 Q1277.7 118 1281.7 112 Q1283.7 109 1285.7 111" stroke="#d04848" stroke-width="1.6" fill="none"/><path d="M1265.7 118 Q1270.7 115 1275.7 118 Q1280.7 115 1285.7 118 V131 Q1280.7 128 1275.7 131 Q1270.7 128 1265.7 131 Z" fill="#f4f4f4" stroke="#4a5a98" stroke-width="1.5"/><path d="M1275.7 118 V131" stroke="#4a5a98" stroke-width="1.2"/>
<path d="M1304.2 115 Q1308.2 108 1312.2 113 Q1316.2 118 1320.2 112 Q1322.2 109 1324.2 111" stroke="#d04848" stroke-width="1.6" fill="none"/><rect x="1305.2" y="116" width="18" height="16" fill="#6a86c8" stroke="#3a5090" stroke-width="1.2"/><path d="M1311.2 119 H1317.2 M1314.2 119 V129 M1311.2 129 H1317.2" stroke="#dfe6f6" stroke-width="1.2"/>
<path d="M1342 115 Q1346 108 1350 113 Q1354 118 1358 112 Q1360 109 1362 111" stroke="#d04848" stroke-width="1.6" fill="none"/><rect x="1345" y="117" width="14" height="16" fill="#f8f8f0" stroke="#888" stroke-width="1"/><rect x="1346" y="116" width="12" height="3" fill="#f0c020"/><path d="M1348 125 L1351 129 L1357 122" stroke="#209a30" stroke-width="2" fill="none"/>
<path d="M1381.7 115 Q1385.7 108 1389.7 113 Q1393.7 118 1397.7 112 Q1399.7 109 1401.7 111" stroke="#d04848" stroke-width="1.6" fill="none"/><path d="M1398.7 116 L1389.7 125" stroke="#333" stroke-width="3"/><path d="M1389.7 125 Q1382.7 129 1384.7 133 Q1387.7 135 1392.7 130" stroke="#555" stroke-width="1.5" fill="none"/>
<rect x="1444" y="110" width="15" height="15" fill="#a8bce8" stroke="#4a5a98" stroke-width="1.2"/><rect x="1446" y="112" width="11" height="6" fill="#f0f4fc"/><rect x="1438" y="117" width="15" height="15" fill="#8ca4dc" stroke="#4a5a98" stroke-width="1.2"/><rect x="1440" y="119" width="11" height="6" fill="#f0f4fc"/><path d="M1436 119 V131" stroke="#e0b020" stroke-width="2" stroke-dasharray="2 1.5"/>
<path d="M1476 111 L1487 119 L1498 111 V127 L1487 119 L1476 127 Z" fill="#a8bce8" stroke="#4a6aa8" stroke-width="1.2"/><rect x="1481" y="126" width="18" height="6" rx="1" fill="#e8e8e8" stroke="#888" stroke-width="1"/><rect x="1484" y="128" width="10" height="2" fill="#30b030"/>
<rect x="1514" y="111" width="23" height="20" fill="#f0f0f0" stroke="#777" stroke-width="1.2"/><rect x="1514" y="111" width="23" height="3" fill="#999"/><path d="M1518 117 L1525 122 L1532 117 V127 L1525 122 L1518 127 Z" fill="#a8bce8" stroke="#4a6aa8" stroke-width="1"/>
<path d="M1556 120 A10 10 0 1 1 1569 129 L1570 133 L1565 129 A10 10 0 0 1 1556 120Z" fill="#8ca4dc" stroke="#4a5a98" stroke-width="1.2"/><text x="1560" y="126" font-family="Liberation Sans" font-weight="bold" font-size="15" fill="#fff" stroke="#4a5a98" stroke-width=".5">?</text>
</svg>
<div class="ab" style="left:0;top:145px;width:42px;height:132px;background:linear-gradient(90deg,#ececec,#dadada 55%,#c6c6c6 90%,#bdbdbd);border-bottom:1px solid #b8b8b8;border-top-right-radius:3px"></div>
<div class="ab" style="left:0;top:278px;width:42px;height:326px;background:linear-gradient(90deg,#ececec,#dadada 55%,#c6c6c6 90%,#bdbdbd);border-bottom:1px solid #b8b8b8;border-top-right-radius:3px"></div>
<div class="ab" style="left:0;top:605px;width:42px;height:172px;background:linear-gradient(90deg,#ececec,#dadada 55%,#c6c6c6 90%,#bdbdbd);border-bottom:1px solid #b8b8b8;border-top-right-radius:3px"></div>
<div class="ab" style="left:0;top:778px;width:59px;height:109px;background:linear-gradient(90deg,#ececec,#dadada 55%,#c6c6c6 90%,#bdbdbd);border-bottom:1px solid #b8b8b8;border-top-right-radius:3px"></div>
<div class="ab" style="left:6.0px;top:148px;width:3.5px;height:3.5px;background:#1a7ae0"></div>
<div class="ab" style="left:12.4px;top:148px;width:3.5px;height:3.5px;background:#1a7ae0"></div>
<div class="ab" style="left:18.8px;top:148px;width:3.5px;height:3.5px;background:#1a7ae0"></div>
<div class="ab" style="left:25.2px;top:148px;width:3.5px;height:3.5px;background:#1a7ae0"></div>
<div class="ab" style="left:31.6px;top:148px;width:3.5px;height:3.5px;background:#1a7ae0"></div>
<div class="ab" style="left:6.0px;top:282px;width:3.5px;height:3.5px;background:#1a7ae0"></div>
<div class="ab" style="left:12.4px;top:282px;width:3.5px;height:3.5px;background:#1a7ae0"></div>
<div class="ab" style="left:18.8px;top:282px;width:3.5px;height:3.5px;background:#1a7ae0"></div>
<div class="ab" style="left:25.2px;top:282px;width:3.5px;height:3.5px;background:#1a7ae0"></div>
<div class="ab" style="left:31.6px;top:282px;width:3.5px;height:3.5px;background:#1a7ae0"></div>
<div class="ab" style="left:6.0px;top:609px;width:3.5px;height:3.5px;background:#1a7ae0"></div>
<div class="ab" style="left:12.4px;top:609px;width:3.5px;height:3.5px;background:#1a7ae0"></div>
<div class="ab" style="left:18.8px;top:609px;width:3.5px;height:3.5px;background:#1a7ae0"></div>
<div class="ab" style="left:25.2px;top:609px;width:3.5px;height:3.5px;background:#1a7ae0"></div>
<div class="ab" style="left:31.6px;top:609px;width:3.5px;height:3.5px;background:#1a7ae0"></div>
<div class="ab" style="left:6.0px;top:782px;width:3.5px;height:3.5px;background:#1a7ae0"></div>
<div class="ab" style="left:12.4px;top:782px;width:3.5px;height:3.5px;background:#1a7ae0"></div>
<div class="ab" style="left:18.8px;top:782px;width:3.5px;height:3.5px;background:#1a7ae0"></div>
<div class="ab" style="left:25.2px;top:782px;width:3.5px;height:3.5px;background:#1a7ae0"></div>
<div class="ab" style="left:31.6px;top:782px;width:3.5px;height:3.5px;background:#1a7ae0"></div>
<div class="ab" style="left:38.0px;top:782px;width:3.5px;height:3.5px;background:#1a7ae0"></div>
<div class="ab" style="left:44.4px;top:782px;width:3.5px;height:3.5px;background:#1a7ae0"></div>
<div class="ab" style="left:50.8px;top:782px;width:3.5px;height:3.5px;background:#1a7ae0"></div>
<svg class="ab" style="left:0;top:145px" width="60" height="742" viewBox="0 145 60 742">
<rect x="8" y="168" width="17" height="16" rx="1.5" fill="#38b038" stroke="#1a7a1a" stroke-width="1"/><path d="M11 172 H15 M11 175 H17 M11 178 H20 M11 181 H22" stroke="#1a6a1a" stroke-width="1.2"/><rect x="21" y="160" width="8" height="11" rx="1.5" fill="#d8dce6" stroke="#6a7080" stroke-width="1"/><path d="M20 162 H19 M20 165 H19 M20 168 H19 M30 162 H31 M30 165 H31 M30 168 H31" stroke="#777" stroke-width="1"/><path d="M11 166 Q12 161 18 162" stroke="#d84040" stroke-width="1.8" fill="none"/><path d="M8 165 L11 169 L14 165 Z" fill="#d84040"/>
<rect x="9" y="201" width="18" height="18" rx="2" fill="#f0f0f0" stroke="#4a5a98" stroke-width="1.6" stroke-dasharray="1.6 1.2"/><text x="12" y="214" font-family="Liberation Sans" font-size="9.5" fill="#c04040">U1</text>
<rect x="20" y="243" width="10" height="12" rx="3" fill="#808080" stroke="#444" stroke-width="1"/><rect x="14" y="244" width="6" height="3" fill="#f0d020"/><rect x="14" y="251" width="6" height="3" fill="#f0d020"/><path d="M7 243 V255" stroke="#d04040" stroke-width="2"/><path d="M8 243 H12 M8 255 H12" stroke="#d04040" stroke-width="1.5"/>
<path d="M14 312 H17 V304" stroke="#333" stroke-width="2" fill="none"/><path d="M19 302 L23 299" stroke="#222" stroke-width="2" stroke-dasharray="2 2"/><rect x="8" y="309" width="6" height="6" fill="#f0d830" stroke="#c0a010" stroke-width=".8"/><rect x="25" y="294" width="6" height="6" fill="#f0d830" stroke="#c0a010" stroke-width=".8"/>
<path d="M9 332 V352 H31 V346" stroke="#6a86c8" stroke-width="4" fill="none"/><path d="M9 332 V352 H31 V346" stroke="#dfe6f6" stroke-width="1.2" fill="none"/><rect x="14" y="336" width="16" height="9" fill="none" stroke="#6a86c8" stroke-width="1" stroke-dasharray="2 1"/><path d="M20 335 V342" stroke="#d04040" stroke-width="2"/><path d="M17 340 L20 345 L23 340 Z" fill="#d04040"/>
<path d="M8 385 H13 V374 H21 V391 H27 V383" stroke="#333" stroke-width="1.6" fill="none"/><path d="M17 385 V377" stroke="#d04040" stroke-width="1.5"/><path d="M15 379 L17 376 L19 379Z" fill="#d04040"/><path d="M24 381 V389" stroke="#d04040" stroke-width="1.5"/><path d="M22 387 L24 390 L26 387Z" fill="#d04040"/>
<rect x="8" y="408" width="5" height="5" fill="#f0d830" stroke="#c0a010" stroke-width=".8"/><rect x="26" y="408" width="5" height="5" fill="#f0d830" stroke="#c0a010" stroke-width=".8"/><path d="M10 413 Q14 420 10 430" stroke="#333" stroke-width="1.4" fill="none"/><path d="M29 413 V430" stroke="#333" stroke-width="1.4"/><path d="M14 421 H24" stroke="#d04040" stroke-width="1.8"/><path d="M22 418 L27 421 L22 424Z" fill="#d04040"/>
<path d="M10 447 L30 459 L10 471" stroke="#6a86c8" stroke-width="5" fill="none"/><path d="M10 447 L30 459 L10 471" stroke="#dfe6f6" stroke-width="1.5" fill="none"/><ellipse cx="18" cy="459" rx="3" ry="2" fill="#d04040"/><ellipse cx="28" cy="459" rx="3" ry="2" fill="#d04040"/>
<rect x="8" y="488" width="14" height="4" fill="#d05a3a"/><path d="M22 490 H30" stroke="#d05a3a" stroke-width="1.2"/><path d="M29 488 L32 490 L29 492Z" fill="#d05a3a"/><rect x="8" y="493" width="14" height="4" fill="#d05a3a"/><path d="M22 495 H30" stroke="#d05a3a" stroke-width="1.2"/><path d="M29 493 L32 495 L29 497Z" fill="#d05a3a"/><rect x="8" y="498" width="14" height="4" fill="#d05a3a"/><path d="M22 500 H30" stroke="#d05a3a" stroke-width="1.2"/><path d="M29 498 L32 500 L29 502Z" fill="#d05a3a"/><rect x="8" y="503" width="14" height="4" fill="#d05a3a"/><path d="M22 505 H30" stroke="#d05a3a" stroke-width="1.2"/><path d="M29 503 L32 505 L29 507Z" fill="#d05a3a"/>
<rect x="8" y="526" width="24" height="24" rx="1" fill="#7c92cc" stroke="#4a5a98" stroke-width="1.2"/><rect x="11" y="529" width="18" height="18" fill="#dfe6f6"/><path d="M11 533 H15 V529 M29 533 H25 V529 M11 543 H15 V547 M29 543 H25 V547" stroke="#4a5a98" stroke-width="1.5" fill="none"/><path d="M14 532 L26 544 M26 532 L14 544" stroke="#d04040" stroke-width="2"/>
<path d="M9 581 V573 Q9 568 14 568 Q19 568 19 573 V582 Q19 587 23 587 Q28 587 28 582 V577" stroke="#3a4a7a" stroke-width="3" fill="none"/><path d="M9 581 V573 Q9 568 14 568 Q19 568 19 573 V582 Q19 587 23 587 Q28 587 28 582 V577" stroke="#dfe6f6" stroke-width="1" fill="none"/><circle cx="7" cy="579" r="2" fill="#5a7ac0"/><circle cx="25" cy="578" r="2" fill="#5a7ac0"/><circle cx="31" cy="578" r="2" fill="#5a7ac0"/>
<path d="M9 623 L31 645" stroke="#4a5a98" stroke-width="2.4" stroke-linecap="round"/>
<rect x="9" y="663" width="22" height="18" rx="1" fill="#8ca0d8" stroke="#4a5a98" stroke-width="1.4"/><rect x="10" y="664" width="20" height="6" fill="#b0c0ec" opacity=".7"/>
<text x="7" y="711" font-family="Liberation Sans" font-size="12" fill="#777">abc</text><circle cx="25" cy="716" r="5.5" fill="#20a030"/><path d="M22 716 H28 M25 713 V719" stroke="#fff" stroke-width="1.8"/>
<text x="7" y="750" font-family="Liberation Sans" font-size="12" fill="#777">abc</text><path d="M18 759 L29 747" stroke="#f0a020" stroke-width="4"/><path d="M17 760 L19 756 L21 758Z" fill="#333"/>
<path d="M19 793 L33 807" stroke="#30a030" stroke-width="3"/><path d="M15 789 L20 794 M15 794 L20 794 M15 799 L20 794 M33 807 L39 802 M33 807 L39 807 M33 807 L39 812" stroke="#5a70b0" stroke-width="1.4"/><circle cx="15" cy="789" r="2" fill="#30a030"/><circle cx="15" cy="794" r="2" fill="#30a030"/><circle cx="15" cy="799" r="2" fill="#30a030"/><circle cx="39" cy="802" r="2" fill="#30a030"/><circle cx="39" cy="807" r="2" fill="#30a030"/><circle cx="39" cy="812" r="2" fill="#30a030"/><ellipse cx="32" cy="794" rx="7" ry="2" fill="#555"/><rect x="29" y="789" width="6" height="5" fill="#d04848"/>
<path d="M19 834 L33 848" stroke="#30a030" stroke-width="3"/><path d="M15 830 L20 835 M15 835 L20 835 M15 840 L20 835 M33 848 L39 843 M33 848 L39 848 M33 848 L39 853" stroke="#5a70b0" stroke-width="1.4"/><circle cx="15" cy="830" r="2" fill="#30a030"/><circle cx="15" cy="835" r="2" fill="#30a030"/><circle cx="15" cy="840" r="2" fill="#30a030"/><circle cx="39" cy="843" r="2" fill="#30a030"/><circle cx="39" cy="848" r="2" fill="#30a030"/><circle cx="39" cy="853" r="2" fill="#30a030"/>
<path d="M19 870 L33 884" stroke="#30a030" stroke-width="3"/><path d="M15 866 L20 871 M15 871 L20 871 M15 876 L20 871 M33 884 L39 879 M33 884 L39 884 M33 884 L39 889" stroke="#5a70b0" stroke-width="1.4"/><circle cx="15" cy="866" r="2" fill="#30a030"/><circle cx="15" cy="871" r="2" fill="#30a030"/><circle cx="15" cy="876" r="2" fill="#30a030"/><circle cx="39" cy="879" r="2" fill="#30a030"/><circle cx="39" cy="884" r="2" fill="#30a030"/><circle cx="39" cy="889" r="2" fill="#30a030"/><path d="M30 866 L36 872 M36 866 L30 872" stroke="#d04040" stroke-width="2.2"/>
</svg>
<div class="ab" style="left:61px;top:145.5px;width:1475px;height:726px;background:#000;border-top:2.5px solid #808080;border-left:3px solid #8a8a8a"></div>
<svg class="ab" style="left:64px;top:147px" width="1470" height="724.5" viewBox="64 147 1470 724.5">
<defs>
<pattern id="dotc" x="0" y="0" width="10" height="10" patternUnits="userSpaceOnUse"><rect x="7" y="0" width="2" height="2" fill="#36322a"/><rect x="2" y="5" width="2" height="2" fill="#36322a"/></pattern>
<pattern id="dotg" x="0" y="0" width="10" height="10" patternUnits="userSpaceOnUse"><rect x="7" y="0" width="2" height="2" fill="#243a1c"/><rect x="2" y="5" width="2" height="2" fill="#243a1c"/></pattern>
<pattern id="dotd" x="0" y="0" width="10" height="10" patternUnits="userSpaceOnUse"><rect x="7" y="0" width="2" height="2" fill="#2c942c"/><rect x="2" y="5" width="2" height="2" fill="#2c942c"/></pattern>
<pattern id="padp" x="-1.2" y="-0.8" width="10" height="5" patternUnits="userSpaceOnUse"><rect width="10" height="5" fill="#878087"/><rect x="0" y="2.5" width="4" height="2.6" fill="#33e033"/><rect x="5" y="0" width="4" height="2.6" fill="#33e033"/></pattern>
</defs>
<rect x="64" y="147" width="1470" height="725" fill="#000"/>
<rect x="616" y="180" width="930" height="449" fill="url(#dotg)"/>
<path d="M1540 177 H613 V632.5 H1540" stroke="#57a57a" stroke-width="6" fill="none" stroke-linejoin="miter"/>
<circle cx="356.3" cy="257.5" r="122.5" fill="url(#dotc)" stroke="#ac967c" stroke-width="1.1"/>
<circle cx="356.2" cy="461.6" r="92.3" fill="url(#dotc)" stroke="#ac967c" stroke-width="1.1"/>
<circle cx="221.4" cy="757.8" r="96" fill="url(#dotc)" stroke="#ac967c" stroke-width="1.1"/>
<circle cx="356.3" cy="257.5" r="85" fill="none" stroke="#e80000" stroke-width="1.2"/>
<circle cx="356.2" cy="461.6" r="54.7" fill="none" stroke="#e80000" stroke-width="1.2"/>
<circle cx="221.4" cy="757.8" r="58.8" fill="none" stroke="#e80000" stroke-width="1.2"/>
<rect x="71" y="147" width="2" height="725" fill="#c40000"/>
<path d="M72 627.5 H368 V872" stroke="#6a9a3a" stroke-width="1.3" fill="none"/>
<rect x="247.2" y="189.0" width="1.6" height="1.6" fill="#f0f0f0"/>
<rect x="247.2" y="374.0" width="1.6" height="1.6" fill="#f0f0f0"/>
<rect x="247.2" y="559.0" width="1.6" height="1.6" fill="#f0f0f0"/>
<rect x="247.2" y="744.0" width="1.6" height="1.6" fill="#f0f0f0"/>
<rect x="432.6" y="189.0" width="1.6" height="1.6" fill="#f0f0f0"/>
<rect x="432.6" y="374.0" width="1.6" height="1.6" fill="#f0f0f0"/>
<rect x="432.6" y="559.0" width="1.6" height="1.6" fill="#f0f0f0"/>
<rect x="432.6" y="744.0" width="1.6" height="1.6" fill="#f0f0f0"/>
<rect x="618.0" y="189.0" width="1.6" height="1.6" fill="#f0f0f0"/>
<rect x="618.0" y="374.0" width="1.6" height="1.6" fill="#f0f0f0"/>
<rect x="618.0" y="559.0" width="1.6" height="1.6" fill="#f0f0f0"/>
<rect x="618.0" y="744.0" width="1.6" height="1.6" fill="#f0f0f0"/>
<rect x="803.4" y="189.0" width="1.6" height="1.6" fill="#f0f0f0"/>
<rect x="803.4" y="374.0" width="1.6" height="1.6" fill="#f0f0f0"/>
<rect x="803.4" y="559.0" width="1.6" height="1.6" fill="#f0f0f0"/>
<rect x="803.4" y="744.0" width="1.6" height="1.6" fill="#f0f0f0"/>
<rect x="988.8" y="189.0" width="1.6" height="1.6" fill="#f0f0f0"/>
<rect x="988.8" y="374.0" width="1.6" height="1.6" fill="#f0f0f0"/>
<rect x="988.8" y="559.0" width="1.6" height="1.6" fill="#f0f0f0"/>
<rect x="988.8" y="744.0" width="1.6" height="1.6" fill="#f0f0f0"/>
<rect x="1174.2" y="189.0" width="1.6" height="1.6" fill="#f0f0f0"/>
<rect x="1174.2" y="374.0" width="1.6" height="1.6" fill="#f0f0f0"/>
<rect x="1174.2" y="559.0" width="1.6" height="1.6" fill="#f0f0f0"/>
<rect x="1174.2" y="744.0" width="1.6" height="1.6" fill="#f0f0f0"/>
<rect x="1359.6" y="189.0" width="1.6" height="1.6" fill="#f0f0f0"/>
<rect x="1359.6" y="374.0" width="1.6" height="1.6" fill="#f0f0f0"/>
<rect x="1359.6" y="559.0" width="1.6" height="1.6" fill="#f0f0f0"/>
<rect x="1359.6" y="744.0" width="1.6" height="1.6" fill="#f0f0f0"/>
<rect x="1545.0" y="189.0" width="1.6" height="1.6" fill="#f0f0f0"/>
<rect x="1545.0" y="374.0" width="1.6" height="1.6" fill="#f0f0f0"/>
<rect x="1545.0" y="559.0" width="1.6" height="1.6" fill="#f0f0f0"/>
<rect x="1545.0" y="744.0" width="1.6" height="1.6" fill="#f0f0f0"/>
<circle cx="711" cy="269" r="26.5" fill="url(#padp)"/>
<circle cx="711" cy="269" r="17" fill="none" stroke="#c8d8a8" stroke-width="1"/>
<path d="M686.5 279 V290 M735.5 279 V290" stroke="#d8d8d8" stroke-width="1" fill="none"/>
<path d="M686.5 288 V290 H690 M735.5 288 V290 H732" stroke="#6a9a3a" stroke-width="1.2" fill="none"/>
<path d="M703 272 L707 270 L714 272 M699 283 Q705 273 708 281 Q706 287 713 289 M714 275 V289" stroke="#e8e8e8" stroke-width="1" fill="none" stroke-dasharray="2 1.2" opacity=".85"/>
<circle cx="805" cy="269" r="26.5" fill="url(#padp)"/>
<circle cx="805" cy="269" r="17" fill="none" stroke="#c8d8a8" stroke-width="1"/>
<path d="M780.5 279 V290 M829.5 279 V290" stroke="#d8d8d8" stroke-width="1" fill="none"/>
<path d="M780.5 288 V290 H784 M829.5 288 V290 H826" stroke="#6a9a3a" stroke-width="1.2" fill="none"/>
<path d="M797 272 L801 270 L808 272 M793 283 Q799 273 802 281 Q800 287 807 289 M808 275 V289" stroke="#e8e8e8" stroke-width="1" fill="none" stroke-dasharray="2 1.2" opacity=".85"/>
<circle cx="953" cy="269" r="26" fill="#1c861c"/><circle cx="953" cy="269" r="26" fill="url(#dotd)"/>
<circle cx="958" cy="269" r="17" fill="none" stroke="#4cc83c" stroke-width="1.3"/>
<path d="M952 272 Q956 267 960 273" stroke="#4cc83c" stroke-width="1" fill="none" stroke-dasharray="2 1.5"/>
<path d="M928.5 279 V290 H932 M977.5 279 V290 H974" stroke="#6e8e3c" stroke-width="1" fill="none"/>
<circle cx="1047" cy="269" r="26.5" fill="url(#padp)"/>
<circle cx="1047" cy="269" r="17" fill="none" stroke="#c8d8a8" stroke-width="1"/>
<path d="M1022.5 279 V290 M1071.5 279 V290" stroke="#d8d8d8" stroke-width="1" fill="none"/>
<path d="M1022.5 288 V290 H1026 M1071.5 288 V290 H1068" stroke="#6a9a3a" stroke-width="1.2" fill="none"/>
<path d="M1039 272 L1043 270 L1050 272 M1035 283 Q1041 273 1044 281 Q1042 287 1049 289 M1050 275 V289" stroke="#e8e8e8" stroke-width="1" fill="none" stroke-dasharray="2 1.2" opacity=".85"/>
<circle cx="1142" cy="269" r="26.5" fill="url(#padp)"/>
<circle cx="1142" cy="269" r="17" fill="none" stroke="#c8d8a8" stroke-width="1"/>
<path d="M1117.5 279 V290 M1166.5 279 V290" stroke="#d8d8d8" stroke-width="1" fill="none"/>
<path d="M1117.5 288 V290 H1121 M1166.5 288 V290 H1163" stroke="#6a9a3a" stroke-width="1.2" fill="none"/>
<path d="M1134 272 L1138 270 L1145 272 M1130 283 Q1136 273 1139 281 Q1137 287 1144 289 M1145 275 V289" stroke="#e8e8e8" stroke-width="1" fill="none" stroke-dasharray="2 1.2" opacity=".85"/>
<circle cx="1237" cy="269" r="26.5" fill="url(#padp)"/>
<circle cx="1237" cy="269" r="17" fill="none" stroke="#c8d8a8" stroke-width="1"/>
<path d="M1212.5 279 V290 M1261.5 279 V290" stroke="#d8d8d8" stroke-width="1" fill="none"/>
<path d="M1212.5 288 V290 H1216 M1261.5 288 V290 H1258" stroke="#6a9a3a" stroke-width="1.2" fill="none"/>
<path d="M1229 272 L1233 270 L1240 272 M1225 283 Q1231 273 1234 281 Q1232 287 1239 289 M1240 275 V289" stroke="#e8e8e8" stroke-width="1" fill="none" stroke-dasharray="2 1.2" opacity=".85"/>
<circle cx="1330" cy="269" r="26.5" fill="url(#padp)"/>
<circle cx="1330" cy="269" r="17" fill="none" stroke="#c8d8a8" stroke-width="1"/>
<path d="M1305.5 279 V290 M1354.5 279 V290" stroke="#d8d8d8" stroke-width="1" fill="none"/>
<path d="M1305.5 288 V290 H1309 M1354.5 288 V290 H1351" stroke="#6a9a3a" stroke-width="1.2" fill="none"/>
<path d="M1322 272 L1326 270 L1333 272 M1318 283 Q1324 273 1327 281 Q1325 287 1332 289 M1333 275 V289" stroke="#e8e8e8" stroke-width="1" fill="none" stroke-dasharray="2 1.2" opacity=".85"/>
<circle cx="1425" cy="269" r="26" fill="#1c861c"/><circle cx="1425" cy="269" r="26" fill="url(#dotd)"/>
<circle cx="1430" cy="269" r="17" fill="none" stroke="#4cc83c" stroke-width="1.3"/>
<path d="M1424 272 Q1428 267 1432 273" stroke="#4cc83c" stroke-width="1" fill="none" stroke-dasharray="2 1.5"/>
<path d="M1400.5 279 V290 H1404 M1449.5 279 V290 H1446" stroke="#6e8e3c" stroke-width="1" fill="none"/>
<circle cx="1519" cy="269" r="26" fill="#1c861c"/><circle cx="1519" cy="269" r="26" fill="url(#dotd)"/>
<circle cx="1524" cy="269" r="17" fill="none" stroke="#4cc83c" stroke-width="1.3"/>
<path d="M1518 272 Q1522 267 1526 273" stroke="#4cc83c" stroke-width="1" fill="none" stroke-dasharray="2 1.5"/>
<path d="M1494.5 279 V290 H1498 M1543.5 279 V290 H1540" stroke="#6e8e3c" stroke-width="1" fill="none"/>
<circle cx="711" cy="363.5" r="26.5" fill="url(#padp)"/>
<circle cx="711" cy="363.5" r="17" fill="none" stroke="#c8d8a8" stroke-width="1"/>
<path d="M686.5 373.5 V384.5 M735.5 373.5 V384.5" stroke="#d8d8d8" stroke-width="1" fill="none"/>
<path d="M686.5 382.5 V384.5 H690 M735.5 382.5 V384.5 H732" stroke="#6a9a3a" stroke-width="1.2" fill="none"/>
<path d="M703 366.5 L707 364.5 L714 366.5 M699 377.5 Q705 367.5 708 375.5 Q706 381.5 713 383.5 M714 369.5 V383.5" stroke="#e8e8e8" stroke-width="1" fill="none" stroke-dasharray="2 1.2" opacity=".85"/>
<circle cx="805" cy="363.5" r="26.5" fill="url(#padp)"/>
<circle cx="805" cy="363.5" r="17" fill="none" stroke="#c8d8a8" stroke-width="1"/>
<path d="M780.5 373.5 V384.5 M829.5 373.5 V384.5" stroke="#d8d8d8" stroke-width="1" fill="none"/>
<path d="M780.5 382.5 V384.5 H784 M829.5 382.5 V384.5 H826" stroke="#6a9a3a" stroke-width="1.2" fill="none"/>
<path d="M797 366.5 L801 364.5 L808 366.5 M793 377.5 Q799 367.5 802 375.5 Q800 381.5 807 383.5 M808 369.5 V383.5" stroke="#e8e8e8" stroke-width="1" fill="none" stroke-dasharray="2 1.2" opacity=".85"/>
<circle cx="953" cy="363.5" r="26" fill="#1c861c"/><circle cx="953" cy="363.5" r="26" fill="url(#dotd)"/>
<circle cx="958" cy="363.5" r="17" fill="none" stroke="#4cc83c" stroke-width="1.3"/>
<path d="M952 366.5 Q956 361.5 960 367.5" stroke="#4cc83c" stroke-width="1" fill="none" stroke-dasharray="2 1.5"/>
<path d="M928.5 373.5 V384.5 H932 M977.5 373.5 V384.5 H974" stroke="#6e8e3c" stroke-width="1" fill="none"/>
<circle cx="1047" cy="363.5" r="26.5" fill="url(#padp)"/>
<circle cx="1047" cy="363.5" r="17" fill="none" stroke="#c8d8a8" stroke-width="1"/>
<path d="M1022.5 373.5 V384.5 M1071.5 373.5 V384.5" stroke="#d8d8d8" stroke-width="1" fill="none"/>
<path d="M1022.5 382.5 V384.5 H1026 M1071.5 382.5 V384.5 H1068" stroke="#6a9a3a" stroke-width="1.2" fill="none"/>
<path d="M1039 366.5 L1043 364.5 L1050 366.5 M1035 377.5 Q1041 367.5 1044 375.5 Q1042 381.5 1049 383.5 M1050 369.5 V383.5" stroke="#e8e8e8" stroke-width="1" fill="none" stroke-dasharray="2 1.2" opacity=".85"/>
<circle cx="1142" cy="363.5" r="26.5" fill="url(#padp)"/>
<circle cx="1142" cy="363.5" r="17" fill="none" stroke="#c8d8a8" stroke-width="1"/>
<path d="M1117.5 373.5 V384.5 M1166.5 373.5 V384.5" stroke="#d8d8d8" stroke-width="1" fill="none"/>
<path d="M1117.5 382.5 V384.5 H1121 M1166.5 382.5 V384.5 H1163" stroke="#6a9a3a" stroke-width="1.2" fill="none"/>
<path d="M1134 366.5 L1138 364.5 L1145 366.5 M1130 377.5 Q1136 367.5 1139 375.5 Q1137 381.5 1144 383.5 M1145 369.5 V383.5" stroke="#e8e8e8" stroke-width="1" fill="none" stroke-dasharray="2 1.2" opacity=".85"/>
<circle cx="1237" cy="363.5" r="26.5" fill="url(#padp)"/>
<circle cx="1237" cy="363.5" r="17" fill="none" stroke="#c8d8a8" stroke-width="1"/>
<path d="M1212.5 373.5 V384.5 M1261.5 373.5 V384.5" stroke="#d8d8d8" stroke-width="1" fill="none"/>
<path d="M1212.5 382.5 V384.5 H1216 M1261.5 382.5 V384.5 H1258" stroke="#6a9a3a" stroke-width="1.2" fill="none"/>
<path d="M1229 366.5 L1233 364.5 L1240 366.5 M1225 377.5 Q1231 367.5 1234 375.5 Q1232 381.5 1239 383.5 M1240 369.5 V383.5" stroke="#e8e8e8" stroke-width="1" fill="none" stroke-dasharray="2 1.2" opacity=".85"/>
<circle cx="1330" cy="363.5" r="26.5" fill="url(#padp)"/>
<circle cx="1330" cy="363.5" r="17" fill="none" stroke="#c8d8a8" stroke-width="1"/>
<path d="M1305.5 373.5 V384.5 M1354.5 373.5 V384.5" stroke="#d8d8d8" stroke-width="1" fill="none"/>
<path d="M1305.5 382.5 V384.5 H1309 M1354.5 382.5 V384.5 H1351" stroke="#6a9a3a" stroke-width="1.2" fill="none"/>
<path d="M1322 366.5 L1326 364.5 L1333 366.5 M1318 377.5 Q1324 367.5 1327 375.5 Q1325 381.5 1332 383.5 M1333 369.5 V383.5" stroke="#e8e8e8" stroke-width="1" fill="none" stroke-dasharray="2 1.2" opacity=".85"/>
<circle cx="1425" cy="363.5" r="26" fill="#1c861c"/><circle cx="1425" cy="363.5" r="26" fill="url(#dotd)"/>
<circle cx="1430" cy="363.5" r="17" fill="none" stroke="#4cc83c" stroke-width="1.3"/>
<path d="M1424 366.5 Q1428 361.5 1432 367.5" stroke="#4cc83c" stroke-width="1" fill="none" stroke-dasharray="2 1.5"/>
<path d="M1400.5 373.5 V384.5 H1404 M1449.5 373.5 V384.5 H1446" stroke="#6e8e3c" stroke-width="1" fill="none"/>
<circle cx="1519" cy="363.5" r="26" fill="#1c861c"/><circle cx="1519" cy="363.5" r="26" fill="url(#dotd)"/>
<circle cx="1524" cy="363.5" r="17" fill="none" stroke="#4cc83c" stroke-width="1.3"/>
<path d="M1518 366.5 Q1522 361.5 1526 367.5" stroke="#4cc83c" stroke-width="1" fill="none" stroke-dasharray="2 1.5"/>
<path d="M1494.5 373.5 V384.5 H1498 M1543.5 373.5 V384.5 H1540" stroke="#6e8e3c" stroke-width="1" fill="none"/>
<circle cx="711" cy="457.5" r="26.5" fill="url(#padp)"/>
<circle cx="711" cy="457.5" r="17" fill="none" stroke="#c8d8a8" stroke-width="1"/>
<path d="M686.5 467.5 V478.5 M735.5 467.5 V478.5" stroke="#d8d8d8" stroke-width="1" fill="none"/>
<path d="M686.5 476.5 V478.5 H690 M735.5 476.5 V478.5 H732" stroke="#6a9a3a" stroke-width="1.2" fill="none"/>
<path d="M703 460.5 L707 458.5 L714 460.5 M699 471.5 Q705 461.5 708 469.5 Q706 475.5 713 477.5 M714 463.5 V477.5" stroke="#e8e8e8" stroke-width="1" fill="none" stroke-dasharray="2 1.2" opacity=".85"/>
<circle cx="805" cy="457.5" r="26.5" fill="url(#padp)"/>
<circle cx="805" cy="457.5" r="17" fill="none" stroke="#c8d8a8" stroke-width="1"/>
<path d="M780.5 467.5 V478.5 M829.5 467.5 V478.5" stroke="#d8d8d8" stroke-width="1" fill="none"/>
<path d="M780.5 476.5 V478.5 H784 M829.5 476.5 V478.5 H826" stroke="#6a9a3a" stroke-width="1.2" fill="none"/>
<path d="M797 460.5 L801 458.5 L808 460.5 M793 471.5 Q799 461.5 802 469.5 Q800 475.5 807 477.5 M808 463.5 V477.5" stroke="#e8e8e8" stroke-width="1" fill="none" stroke-dasharray="2 1.2" opacity=".85"/>
<circle cx="953" cy="457.5" r="26" fill="#1c861c"/><circle cx="953" cy="457.5" r="26" fill="url(#dotd)"/>
<circle cx="958" cy="457.5" r="17" fill="none" stroke="#4cc83c" stroke-width="1.3"/>
<path d="M952 460.5 Q956 455.5 960 461.5" stroke="#4cc83c" stroke-width="1" fill="none" stroke-dasharray="2 1.5"/>
<path d="M928.5 467.5 V478.5 H932 M977.5 467.5 V478.5 H974" stroke="#6e8e3c" stroke-width="1" fill="none"/>
<circle cx="1047" cy="457.5" r="26.5" fill="url(#padp)"/>
<circle cx="1047" cy="457.5" r="17" fill="none" stroke="#c8d8a8" stroke-width="1"/>
<path d="M1022.5 467.5 V478.5 M1071.5 467.5 V478.5" stroke="#d8d8d8" stroke-width="1" fill="none"/>
<path d="M1022.5 476.5 V478.5 H1026 M1071.5 476.5 V478.5 H1068" stroke="#6a9a3a" stroke-width="1.2" fill="none"/>
<path d="M1039 460.5 L1043 458.5 L1050 460.5 M1035 471.5 Q1041 461.5 1044 469.5 Q1042 475.5 1049 477.5 M1050 463.5 V477.5" stroke="#e8e8e8" stroke-width="1" fill="none" stroke-dasharray="2 1.2" opacity=".85"/>
<circle cx="1142" cy="457.5" r="26.5" fill="url(#padp)"/>
<circle cx="1142" cy="457.5" r="17" fill="none" stroke="#c8d8a8" stroke-width="1"/>
<path d="M1117.5 467.5 V478.5 M1166.5 467.5 V478.5" stroke="#d8d8d8" stroke-width="1" fill="none"/>
<path d="M1117.5 476.5 V478.5 H1121 M1166.5 476.5 V478.5 H1163" stroke="#6a9a3a" stroke-width="1.2" fill="none"/>
<path d="M1134 460.5 L1138 458.5 L1145 460.5 M1130 471.5 Q1136 461.5 1139 469.5 Q1137 475.5 1144 477.5 M1145 463.5 V477.5" stroke="#e8e8e8" stroke-width="1" fill="none" stroke-dasharray="2 1.2" opacity=".85"/>
<circle cx="1237" cy="457.5" r="26.5" fill="url(#padp)"/>
<circle cx="1237" cy="457.5" r="17" fill="none" stroke="#c8d8a8" stroke-width="1"/>
<path d="M1212.5 467.5 V478.5 M1261.5 467.5 V478.5" stroke="#d8d8d8" stroke-width="1" fill="none"/>
<path d="M1212.5 476.5 V478.5 H1216 M1261.5 476.5 V478.5 H1258" stroke="#6a9a3a" stroke-width="1.2" fill="none"/>
<path d="M1229 460.5 L1233 458.5 L1240 460.5 M1225 471.5 Q1231 461.5 1234 469.5 Q1232 475.5 1239 477.5 M1240 463.5 V477.5" stroke="#e8e8e8" stroke-width="1" fill="none" stroke-dasharray="2 1.2" opacity=".85"/>
<circle cx="1330" cy="457.5" r="26.5" fill="url(#padp)"/>
<circle cx="1330" cy="457.5" r="17" fill="none" stroke="#c8d8a8" stroke-width="1"/>
<path d="M1305.5 467.5 V478.5 M1354.5 467.5 V478.5" stroke="#d8d8d8" stroke-width="1" fill="none"/>
<path d="M1305.5 476.5 V478.5 H1309 M1354.5 476.5 V478.5 H1351" stroke="#6a9a3a" stroke-width="1.2" fill="none"/>
<path d="M1322 460.5 L1326 458.5 L1333 460.5 M1318 471.5 Q1324 461.5 1327 469.5 Q1325 475.5 1332 477.5 M1333 463.5 V477.5" stroke="#e8e8e8" stroke-width="1" fill="none" stroke-dasharray="2 1.2" opacity=".85"/>
<circle cx="1425" cy="457.5" r="26" fill="#1c861c"/><circle cx="1425" cy="457.5" r="26" fill="url(#dotd)"/>
<circle cx="1430" cy="457.5" r="17" fill="none" stroke="#4cc83c" stroke-width="1.3"/>
<path d="M1424 460.5 Q1428 455.5 1432 461.5" stroke="#4cc83c" stroke-width="1" fill="none" stroke-dasharray="2 1.5"/>
<path d="M1400.5 467.5 V478.5 H1404 M1449.5 467.5 V478.5 H1446" stroke="#6e8e3c" stroke-width="1" fill="none"/>
<circle cx="1519" cy="457.5" r="26" fill="#1c861c"/><circle cx="1519" cy="457.5" r="26" fill="url(#dotd)"/>
<circle cx="1524" cy="457.5" r="17" fill="none" stroke="#4cc83c" stroke-width="1.3"/>
<path d="M1518 460.5 Q1522 455.5 1526 461.5" stroke="#4cc83c" stroke-width="1" fill="none" stroke-dasharray="2 1.5"/>
<path d="M1494.5 467.5 V478.5 H1498 M1543.5 467.5 V478.5 H1540" stroke="#6e8e3c" stroke-width="1" fill="none"/>
<circle cx="711" cy="551.5" r="26.5" fill="url(#padp)"/>
<circle cx="711" cy="551.5" r="17" fill="none" stroke="#c8d8a8" stroke-width="1"/>
<path d="M686.5 561.5 V572.5 M735.5 561.5 V572.5" stroke="#d8d8d8" stroke-width="1" fill="none"/>
<path d="M686.5 570.5 V572.5 H690 M735.5 570.5 V572.5 H732" stroke="#6a9a3a" stroke-width="1.2" fill="none"/>
<path d="M703 554.5 L707 552.5 L714 554.5 M699 565.5 Q705 555.5 708 563.5 Q706 569.5 713 571.5 M714 557.5 V571.5" stroke="#e8e8e8" stroke-width="1" fill="none" stroke-dasharray="2 1.2" opacity=".85"/>
<circle cx="805" cy="551.5" r="26.5" fill="url(#padp)"/>
<circle cx="805" cy="551.5" r="17" fill="none" stroke="#c8d8a8" stroke-width="1"/>
<path d="M780.5 561.5 V572.5 M829.5 561.5 V572.5" stroke="#d8d8d8" stroke-width="1" fill="none"/>
<path d="M780.5 570.5 V572.5 H784 M829.5 570.5 V572.5 H826" stroke="#6a9a3a" stroke-width="1.2" fill="none"/>
<path d="M797 554.5 L801 552.5 L808 554.5 M793 565.5 Q799 555.5 802 563.5 Q800 569.5 807 571.5 M808 557.5 V571.5" stroke="#e8e8e8" stroke-width="1" fill="none" stroke-dasharray="2 1.2" opacity=".85"/>
<circle cx="953" cy="551.5" r="26" fill="#1c861c"/><circle cx="953" cy="551.5" r="26" fill="url(#dotd)"/>
<circle cx="958" cy="551.5" r="17" fill="none" stroke="#4cc83c" stroke-width="1.3"/>
<path d="M952 554.5 Q956 549.5 960 555.5" stroke="#4cc83c" stroke-width="1" fill="none" stroke-dasharray="2 1.5"/>
<path d="M928.5 561.5 V572.5 H932 M977.5 561.5 V572.5 H974" stroke="#6e8e3c" stroke-width="1" fill="none"/>
<circle cx="1047" cy="551.5" r="26.5" fill="url(#padp)"/>
<circle cx="1047" cy="551.5" r="17" fill="none" stroke="#c8d8a8" stroke-width="1"/>
<path d="M1022.5 561.5 V572.5 M1071.5 561.5 V572.5" stroke="#d8d8d8" stroke-width="1" fill="none"/>
<path d="M1022.5 570.5 V572.5 H1026 M1071.5 570.5 V572.5 H1068" stroke="#6a9a3a" stroke-width="1.2" fill="none"/>
<path d="M1039 554.5 L1043 552.5 L1050 554.5 M1035 565.5 Q1041 555.5 1044 563.5 Q1042 569.5 1049 571.5 M1050 557.5 V571.5" stroke="#e8e8e8" stroke-width="1" fill="none" stroke-dasharray="2 1.2" opacity=".85"/>
<circle cx="1142" cy="551.5" r="26.5" fill="url(#padp)"/>
<circle cx="1142" cy="551.5" r="17" fill="none" stroke="#c8d8a8" stroke-width="1"/>
<path d="M1117.5 561.5 V572.5 M1166.5 561.5 V572.5" stroke="#d8d8d8" stroke-width="1" fill="none"/>
<path d="M1117.5 570.5 V572.5 H1121 M1166.5 570.5 V572.5 H1163" stroke="#6a9a3a" stroke-width="1.2" fill="none"/>
<path d="M1134 554.5 L1138 552.5 L1145 554.5 M1130 565.5 Q1136 555.5 1139 563.5 Q1137 569.5 1144 571.5 M1145 557.5 V571.5" stroke="#e8e8e8" stroke-width="1" fill="none" stroke-dasharray="2 1.2" opacity=".85"/>
<circle cx="1237" cy="551.5" r="26.5" fill="url(#padp)"/>
<circle cx="1237" cy="551.5" r="17" fill="none" stroke="#c8d8a8" stroke-width="1"/>
<path d="M1212.5 561.5 V572.5 M1261.5 561.5 V572.5" stroke="#d8d8d8" stroke-width="1" fill="none"/>
<path d="M1212.5 570.5 V572.5 H1216 M1261.5 570.5 V572.5 H1258" stroke="#6a9a3a" stroke-width="1.2" fill="none"/>
<path d="M1229 554.5 L1233 552.5 L1240 554.5 M1225 565.5 Q1231 555.5 1234 563.5 Q1232 569.5 1239 571.5 M1240 557.5 V571.5" stroke="#e8e8e8" stroke-width="1" fill="none" stroke-dasharray="2 1.2" opacity=".85"/>
<circle cx="1330" cy="551.5" r="26.5" fill="url(#padp)"/>
<circle cx="1330" cy="551.5" r="17" fill="none" stroke="#c8d8a8" stroke-width="1"/>
<path d="M1305.5 561.5 V572.5 M1354.5 561.5 V572.5" stroke="#d8d8d8" stroke-width="1" fill="none"/>
<path d="M1305.5 570.5 V572.5 H1309 M1354.5 570.5 V572.5 H1351" stroke="#6a9a3a" stroke-width="1.2" fill="none"/>
<path d="M1322 554.5 L1326 552.5 L1333 554.5 M1318 565.5 Q1324 555.5 1327 563.5 Q1325 569.5 1332 571.5 M1333 557.5 V571.5" stroke="#e8e8e8" stroke-width="1" fill="none" stroke-dasharray="2 1.2" opacity=".85"/>
<circle cx="1425" cy="551.5" r="26" fill="#1c861c"/><circle cx="1425" cy="551.5" r="26" fill="url(#dotd)"/>
<circle cx="1430" cy="551.5" r="17" fill="none" stroke="#4cc83c" stroke-width="1.3"/>
<path d="M1424 554.5 Q1428 549.5 1432 555.5" stroke="#4cc83c" stroke-width="1" fill="none" stroke-dasharray="2 1.5"/>
<path d="M1400.5 561.5 V572.5 H1404 M1449.5 561.5 V572.5 H1446" stroke="#6e8e3c" stroke-width="1" fill="none"/>
<circle cx="1519" cy="551.5" r="26" fill="#1c861c"/><circle cx="1519" cy="551.5" r="26" fill="url(#dotd)"/>
<circle cx="1524" cy="551.5" r="17" fill="none" stroke="#4cc83c" stroke-width="1.3"/>
<path d="M1518 554.5 Q1522 549.5 1526 555.5" stroke="#4cc83c" stroke-width="1" fill="none" stroke-dasharray="2 1.5"/>
<path d="M1494.5 561.5 V572.5 H1498 M1543.5 561.5 V572.5 H1540" stroke="#6e8e3c" stroke-width="1" fill="none"/>
<path d="M919.3 269.3 V292.5 M916 276 H928 L919.5 292" stroke="#6a9a3a" stroke-width="1.2" fill="none"/><path d="M979.6 268 H989.5 V292.5" stroke="#6a9a3a" stroke-width="1.2" fill="none"/>
<path d="M711 269 L721 259.5 H796 L805 269" stroke="#e8e8e8" stroke-width="1.1" fill="none"/>
<path d="M711 269 L721 259.5 H796 L805 269" stroke="#18b0e0" stroke-width="1.1" fill="none" stroke-dasharray="10 10"/>
<path d="M711 269 L721 278.5 V353.5 L711 363.5 L721 373 V448 L711 457.5 L721 467 V541.8 L711 551.5" stroke="#e8e8e8" stroke-width="1.1" fill="none"/>
<path d="M711 269 L721 278.5 V353.5 L711 363.5 L721 373 V448 L711 457.5 L721 467 V541.8 L711 551.5" stroke="#18b0e0" stroke-width="1.1" fill="none" stroke-dasharray="10 10"/>
<path d="M721 352.5 H800" stroke="#e8e8e8" stroke-width="1.1" fill="none"/>
<path d="M721 352.5 H800" stroke="#18b0e0" stroke-width="1.1" fill="none" stroke-dasharray="10 10"/>
<path d="M721 541.8 H800" stroke="#e8e8e8" stroke-width="1.1" fill="none"/>
<path d="M721 541.8 H800" stroke="#18b0e0" stroke-width="1.1" fill="none" stroke-dasharray="10 10"/>
<path d="M1047 269 L1056.6 259.5 H1132 L1142 269 L1152 259.5 H1227 L1237 269 L1247 259.5 H1322 L1330 269" stroke="#e8e8e8" stroke-width="1.1" fill="none"/>
<path d="M1047 269 L1056.6 259.5 H1132 L1142 269 L1152 259.5 H1227 L1237 269 L1247 259.5 H1322 L1330 269" stroke="#18b0e0" stroke-width="1.1" fill="none" stroke-dasharray="10 10"/>
<path d="M1047 269 L1056.6 278.5 V352" stroke="#e8e8e8" stroke-width="1.1" fill="none"/>
<path d="M1047 269 L1056.6 278.5 V352" stroke="#18b0e0" stroke-width="1.1" fill="none" stroke-dasharray="10 10"/>
<path d="M1237 353.5 H1321.6 L1330 364" stroke="#e8e8e8" stroke-width="1.1" fill="none"/>
<path d="M1237 353.5 H1321.6 L1330 364" stroke="#18b0e0" stroke-width="1.1" fill="none" stroke-dasharray="10 10"/>
<path d="M1237 457.5 L1244.7 467 V542.6 H1321.6 L1330 551" stroke="#e8e8e8" stroke-width="1.1" fill="none"/>
<path d="M1237 457.5 L1244.7 467 V542.6 H1321.6 L1330 551" stroke="#18b0e0" stroke-width="1.1" fill="none" stroke-dasharray="10 10"/>
<path d="M1330 457.5 L1339 467 V540 L1330 551" stroke="#e8e8e8" stroke-width="1.1" fill="none"/>
<path d="M1330 457.5 L1339 467 V540 L1330 551" stroke="#18b0e0" stroke-width="1.1" fill="none" stroke-dasharray="10 10"/>
<path d="M1330 551.5 L1534 568.7" stroke="#e8e8e8" stroke-width="1.1" fill="none"/>
<path d="M1330 551.5 L1534 568.7" stroke="#18b0e0" stroke-width="1.1" fill="none" stroke-dasharray="10 10"/>
<path d="M1237 584.4 L1534 607.3" stroke="#e8e8e8" stroke-width="1.1" fill="none"/>
<path d="M1237 584.4 L1534 607.3" stroke="#18b0e0" stroke-width="1.1" fill="none" stroke-dasharray="10 10"/>
</svg>
<div class="ab" style="left:62px;top:881px;width:1153px;height:6px;background:#fff;border-top:2px solid #7a7a7a;border-left:1px solid #7a7a7a"></div>
<div class="ab" style="left:63px;top:883px;width:22px;height:4px;background:linear-gradient(90deg,#f0f0f0,#c8c8c8);border-right:1px solid #888"></div>
<div class="ab" style="left:1234px;top:880px;width:2px;height:7px;background:#666"></div>
<div class="ab" style="left:1244px;top:881px;width:21px;height:6px;background:linear-gradient(90deg,#f4f4f4,#bcbcbc);border-top:1px solid #777;border-left:1px solid #777"></div>
<div class="ab" style="left:1268px;top:883.5px;width:266px;height:4px;background:#000"></div>
<div class="ab" style="left:1273.5px;top:885px;width:62px;height:2px;background:#e00000"></div>
<div class="t" style="left:86px;top:884px;font-size:12px;color:#000;height:3px;overflow:hidden">l&nbsp;&nbsp;&nbsp;&nbsp;&nbsp;ll&nbsp;&nbsp;&nbsp;&nbsp;&nbsp;&nbsp;&nbsp;&nbsp;l</div>
<div class="ab" style="left:1534px;top:145px;width:275px;height:742px;background:#f0f0f0"></div>
<div class="ab" style="left:1542px;top:145px;width:1px;height:742px;background:#909090"></div>
<div class="ab" style="left:1543px;top:145px;width:266px;height:19.5px;background:linear-gradient(#ececec,#bebebe)"></div>
<div class="ab" style="left:1549px;top:150px;width:2px;height:3px;background:#1a7ae0"></div><div class="ab" style="left:1549px;top:155px;width:2px;height:3px;background:#1a7ae0"></div>
<div class="fp" style="left:1557px;top:146px;font-size:14px">Find</div>
<div class="ab" style="left:1554px;top:182px;width:234px;height:285px;border:1px solid #c8c8c8;box-shadow:inset 1px 1px 0 #fff"></div>
<div class="ab" style="left:1562px;top:175px;width:150px;height:14px;background:#f0f0f0"></div>
<div class="fp" style="left:1565px;top:177px">Design Object Find Filter</div>
<div class="ab" style="left:1562px;top:197px;width:57px;height:20px;background:#f0f0f0;border-top:1px solid #fff;border-left:1px solid #fff;border-right:2px solid #808080;border-bottom:2px solid #808080;"></div>
<div class="fp" style="left:1571px;top:200.0px">All On</div>
<div class="ab" style="left:1633px;top:197px;width:61px;height:20px;background:#f0f0f0;border-top:1px solid #fff;border-left:1px solid #fff;border-right:2px solid #606060;border-bottom:2px solid #606060;outline:1px solid #5a5a5a;"></div>
<div class="fp" style="left:1645px;top:200.0px">All Off</div>
<div class="cb " style="left:1563px;top:225px"></div>
<div class="fp " style="left:1585px;top:226px">Groups</div>
<div class="cb " style="left:1668px;top:225px"></div>
<div class="fp " style="left:1690px;top:226px">Shapes</div>
<div class="cb cbd" style="left:1563px;top:253px"></div>
<div class="fp dis" style="left:1585px;top:254px">Comps</div>
<div class="cb cbd" style="left:1668px;top:253px"></div>
<div class="fp dis" style="left:1690px;top:254px">Voids/Cavities</div>
<div class="cb " style="left:1563px;top:280px"></div>
<svg class="ab" style="left:1566px;top:283px" width="9" height="9" viewBox="0 0 9 9"><path d="M1 4 L3.5 7 L8 1.5" stroke="#000" stroke-width="2" fill="none"/></svg>
<div class="fp " style="left:1585px;top:281px">Symbols</div>
<div class="cb " style="left:1668px;top:280px"></div>
<div class="fp " style="left:1690px;top:281px">Cline segs</div>
<div class="cb cbd" style="left:1563px;top:310px"></div>
<div class="fp dis" style="left:1585px;top:311px">Functions</div>
<div class="cb " style="left:1668px;top:310px"></div>
<div class="fp " style="left:1690px;top:311px">Other segs</div>
<div class="cb cbd" style="left:1563px;top:335px"></div>
<div class="fp dis" style="left:1585px;top:336px">Nets</div>
<div class="cb " style="left:1668px;top:335px"></div>
<div class="fp " style="left:1690px;top:336px">Figures</div>
<div class="cb " style="left:1563px;top:363px"></div>
<div class="fp " style="left:1585px;top:364px">Pins</div>
<div class="cb cbd" style="left:1668px;top:363px"></div>
<div class="fp dis" style="left:1690px;top:364px">DRC errors</div>
<div class="cb " style="left:1563px;top:390px"></div>
<div class="fp " style="left:1585px;top:391px">Vias</div>
<div class="cb " style="left:1668px;top:390px"></div>
<div class="fp " style="left:1690px;top:391px">Text</div>
<div class="cb " style="left:1563px;top:418px"></div>
<div class="fp " style="left:1585px;top:419px">Clines</div>
<div class="cb cbd" style="left:1668px;top:418px"></div>
<div class="fp dis" style="left:1690px;top:419px">Ratsnests</div>
<div class="cb " style="left:1563px;top:445px"></div>
<div class="fp " style="left:1585px;top:446px">Lines</div>
<div class="cb " style="left:1668px;top:445px"></div>
<div class="fp " style="left:1690px;top:446px">Rat Ts</div>
<div class="ab" style="left:1554px;top:485px;width:234px;height:65px;border:1px solid #c8c8c8;box-shadow:inset 1px 1px 0 #fff"></div>
<div class="ab" style="left:1562px;top:478px;width:92px;height:14px;background:#f0f0f0"></div>
<div class="fp" style="left:1566px;top:480px">Find By Name</div>
<div class="ab" style="left:1562px;top:498px;width:151px;height:23px;background:#fff;border-top:2px solid #808080;border-left:2px solid #808080"></div>
<div class="ab" style="left:1691px;top:500px;width:20px;height:19px;background:#f0f0f0;border-right:2px solid #808080;border-bottom:2px solid #808080"></div>
<div class="ab" style="left:1720px;top:498px;width:62px;height:23px;background:#fff;border-top:2px solid #808080;border-left:2px solid #808080"></div>
<div class="ab" style="left:1762px;top:500px;width:20px;height:19px;background:#f0f0f0;border-right:2px solid #808080;border-bottom:2px solid #808080"></div>
<div class="fp" style="left:1566px;top:503px">Property</div>
<div class="fp" style="left:1725px;top:503px">Name</div>
<svg class="ab" style="left:1562px;top:532px" width="10" height="12" viewBox="0 0 10 12"><path d="M2 1 L7 6 L2 11" stroke="#000" stroke-width="1.2" fill="none"/></svg>
<div class="ab" style="left:1582px;top:526px;width:131px;height:23px;background:#fff;border-top:2px solid #808080;border-left:2px solid #808080"></div>
<div class="ab" style="left:1720px;top:527px;width:63px;height:27px;background:#f0f0f0;border-top:1px solid #fff;border-left:1px solid #fff;border-right:2px solid #808080;border-bottom:2px solid #808080;"></div>
<div class="fp" style="left:1730px;top:533.5px">More...</div>
<div style="display:none"></div>
<div class="t" style="left:1693.5px;top:866px;font-size:12.4px;color:#7a7a7a">CSDN @_She001</div>
<div class="ab" style="left:1541px;top:142px;width:244px;height:373px;border:7px solid #f43838"></div>
<div class="ab" style="left:786px;top:354px;width:195px;height:423px;background:#fff;border:1px solid #a0a0a0;box-shadow:1px 1px 2px rgba(0,0,0,.3)"></div>
<div class="ab" style="left:787px;top:358px;width:29px;height:415px;background:linear-gradient(90deg,#f0f0f0,#dcdcdc 55%,#b0b0b0)"></div>
<div class="ab" style="left:817px;top:590.7px;width:163px;height:78.29999999999995px;background:#efefef"></div>
<div class="ab" style="left:817px;top:695.3px;width:163px;height:26.300000000000068px;background:#efefef"></div>
<div class="ab" style="left:817px;top:748px;width:163px;height:26.200000000000045px;background:#f8dada"></div>
<div class="ab" style="left:820px;top:439px;width:160px;height:2px;background:#3a3a3a"></div>
<div class="ab" style="left:820px;top:525px;width:160px;height:2px;background:#3a3a3a"></div>
<div class="ab" style="left:820px;top:585px;width:160px;height:2px;background:#3a3a3a"></div>
<div class="mi" style="left:823px;top:362.5px">Done</div>
<div class="mi" style="left:948px;top:362.5px">F6</div>
<div class="mi" style="left:823px;top:389.5px">Oops</div>
<div class="mi" style="left:948px;top:389.5px">F8</div>
<div class="mi" style="left:823px;top:415.5px">Cancel</div>
<div class="mi" style="left:948px;top:415.5px">F9</div>
<div class="mi" style="left:823px;top:449.5px">Select by Polygon</div>
<div class="mi" style="left:823px;top:475.5px">Select by Lasso</div>
<div class="mi" style="left:823px;top:502.5px">Select on Path</div>
<div class="mi" style="left:823px;top:535.5px">Temp Group</div>
<div class="mi" style="left:823px;top:562.5px">Reject</div>
<div class="mi dis" style="left:823px;top:595.5px">Alt Symbol</div>
<div class="mi dis" style="left:823px;top:622.5px">Mirror Geometry</div>
<div class="mi dis" style="left:823px;top:648.5px">Mirror</div>
<div class="mi" style="left:823px;top:674.5px">Set Rotate Angle</div>
<div class="mi dis" style="left:823px;top:700.5px">Rotate</div>
<div class="mi" style="left:823px;top:727.5px">Options</div>
<div class="mi" style="left:823px;top:753.5px">Snap pick to</div>
<svg class="ab" style="left:968px;top:727px" width="8" height="12"><path d="M1 1 L6 6 L1 11Z" fill="#000"/></svg>
<svg class="ab" style="left:968px;top:753px" width="8" height="12"><path d="M1 1 L6 6 L1 11Z" fill="#fff"/></svg>
<div class="ab" style="left:980px;top:350px;width:258px;height:427px;background:#fff;border:1px solid #a0a0a0;box-shadow:1px 1px 2px rgba(0,0,0,.3)"></div>
<div class="ab" style="left:981px;top:354px;width:29px;height:419px;background:linear-gradient(90deg,#f0f0f0,#dcdcdc 55%,#b0b0b0)"></div>
<div class="ab" style="left:1012px;top:617px;width:223px;height:26px;background:#f6dada"></div>
<div class="mi" style="left:1018px;top:359.0px">Segment Vertex</div>
<div class="mi" style="left:1018px;top:385.3px">Segment Midpoint</div>
<div class="mi" style="left:1018px;top:411.5px">Segment</div>
<div class="mi" style="left:1018px;top:437.8px">Rectangle Edge Vertex</div>
<div class="mi" style="left:1018px;top:464.1px">Rectangle Edge Midpoint</div>
<div class="mi" style="left:1018px;top:490.4px">Rectangle Edge</div>
<div class="mi" style="left:1018px;top:516.6px">Shape Center</div>
<div class="mi" style="left:1018px;top:542.9px">Arc/Circle Center</div>
<div class="mi" style="left:1018px;top:569.2px">Symbol Origin</div>
<div class="mi" style="left:1018px;top:595.4px">Symbol Center</div>
<div class="mi" style="left:1018px;top:621.7px">Pin</div>
<div class="mi" style="left:1018px;top:648.0px">Via</div>
<div class="mi" style="left:1018px;top:674.2px">Figure</div>
<div class="mi" style="left:1018px;top:700.5px">Intersection</div>
<div class="mi" style="left:1018px;top:726.8px">Off-grid Location</div>
<div class="mi" style="left:1018px;top:753.0px">Grid Point</div>
<div class="ab" style="left:128px;top:45px;width:57px;height:57px;border:7px solid #f43838"></div>
<div class="ab" style="left:191px;top:97px;width:144px;height:43px;background:rgba(64,64,64,.86);border-radius:5px"></div>
<div class="t" style="left:199px;top:108.5px;font-size:20px;color:#fff">首先点击这里</div>
<div class="ab" style="left:154.5px;top:104.5px;width:25.0px;height:25.0px;border-radius:50%;background:#f43838;color:#fff;font-size:17px;line-height:25.0px;text-align:center">1</div>
<div class="ab" style="left:1213.5px;top:124.5px;width:25.0px;height:25.0px;border-radius:50%;background:#f43838;color:#fff;font-size:17px;line-height:25.0px;text-align:center">2</div>
<div class="t" style="left:1252px;top:131.5px;font-size:27px;color:#f43838">点击只使用模型</div>
<svg class="ab" style="left:1420px;top:150px" width="130" height="60" viewBox="1420 150 130 60"><path d="M1426 158 L1513.5 187 L1519 181.5 L1537 198.4 L1512 202 L1511.5 193 L1426 159.5 Z" fill="#f43838"/></svg>
<div class="ab" style="left:552.2px;top:673.2px;width:25.6px;height:25.6px;border-radius:50%;background:#f43838;color:#fff;font-size:14px;line-height:25.6px;text-align:center">3</div>
<div class="t" style="left:597px;top:676px;font-size:20px;color:#fff">点击抓取 焊盘</div>
</body></html>
